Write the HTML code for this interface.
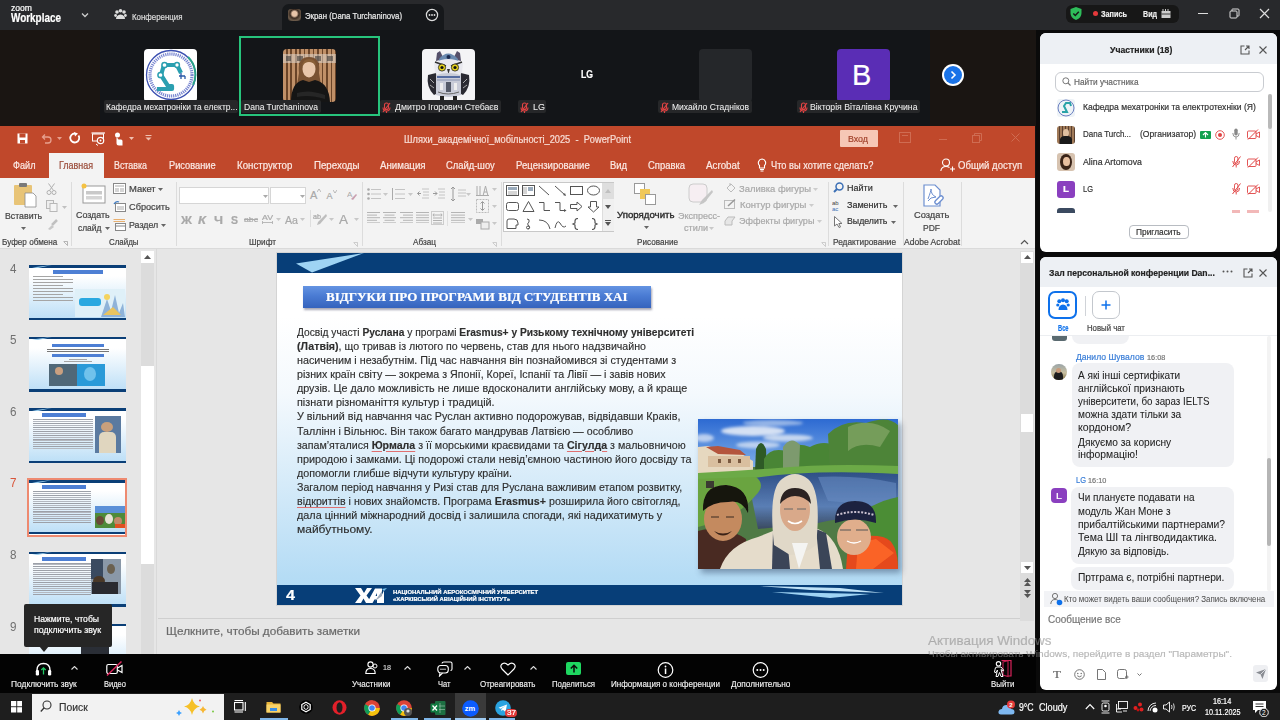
<!DOCTYPE html>
<html><head><meta charset="utf-8">
<style>
*{margin:0;padding:0;box-sizing:border-box}
html,body{width:1280px;height:720px;overflow:hidden;background:#0c0c0c;font-family:"Liberation Sans",sans-serif}
.a{position:absolute}
.t{position:absolute;white-space:nowrap;line-height:1;-webkit-text-stroke:0.2px currentColor}
b{font-weight:bold}
.sp{text-decoration:underline solid #e07070;text-decoration-thickness:0.7px;text-underline-offset:1.5px}
#top{left:0;top:0;width:1280px;height:30px;background:#28292c}
#strip{left:0;top:30px;width:1280px;height:96px;background:#131518}
</style></head><body>
<div id="top" class="a">
  <div class="t" style="left:10.5px;top:4px;font-size:9px;color:#fff;;transform:scaleX(0.9539);transform-origin:0 0">zoom</div>
  <div class="t" style="left:10.5px;top:12px;font-size:12.5px;color:#fff;font-weight:bold;;transform:scaleX(0.7937);transform-origin:0 0">Workplace</div>
  <svg class="a" style="left:80px;top:11px" width="10" height="8" viewBox="0 0 10 8"><path d="M2 2.5 L5 5.5 L8 2.5" stroke="#ccc" stroke-width="1.3" fill="none"/></svg>
  <svg class="a" style="left:114px;top:9px" width="13" height="12" viewBox="0 0 13 12"><circle cx="3" cy="3" r="1.8" fill="#ddd"/><circle cx="6.5" cy="1.8" r="1.8" fill="#ddd"/><circle cx="10" cy="3" r="1.8" fill="#ddd"/><path d="M2 10 Q2 6 6.5 5.5 Q11 6 11 10 Z" fill="#ddd"/><circle cx="1.6" cy="6.5" r="1.4" fill="#ddd"/><circle cx="11.4" cy="6.5" r="1.4" fill="#ddd"/></svg>
  <div class="t" style="left:132px;top:12px;font-size:9.5px;color:#ddd;;transform:scaleX(0.8296);transform-origin:0 0">Конференция</div>
  <div class="a" style="left:282px;top:4px;width:162px;height:26px;background:#16181b;border-radius:7px 7px 0 0"></div>
  <div class="a" style="left:288px;top:9px;width:13px;height:12px;border-radius:3px;background:radial-gradient(circle at 50% 40%,#e8c4a8 0 25%,#3a2a20 45%,#6b5a4a 70%,#2a2220 100%)"></div>
  <div class="t" style="left:305px;top:11px;font-size:9.5px;color:#eee;;transform:scaleX(0.8209);transform-origin:0 0">Экран (Dana Turchaninova)</div>
  <svg class="a" style="left:425px;top:8px" width="14" height="14" viewBox="0 0 14 14"><circle cx="7" cy="7" r="5.6" stroke="#ddd" stroke-width="1.2" fill="none"/><circle cx="4.5" cy="7" r="0.9" fill="#ddd"/><circle cx="7" cy="7" r="0.9" fill="#ddd"/><circle cx="9.5" cy="7" r="0.9" fill="#ddd"/></svg>
  <div class="a" style="left:1066px;top:5px;width:113px;height:17.5px;background:#171717;border-radius:6px"></div>
  <svg class="a" style="left:1069px;top:6px" width="14" height="15" viewBox="0 0 14 15"><path d="M7 1 L12.5 3 L12.5 7 Q12.5 12 7 14 Q1.5 12 1.5 7 L1.5 3 Z" fill="#2ebd5a"/><path d="M4.3 7.5 L6.3 9.5 L9.8 5.8" stroke="#181818" stroke-width="1.5" fill="none"/></svg>
  <div class="a" style="left:1093px;top:11px;width:5px;height:5px;border-radius:50%;background:#e5393b"></div>
  <div class="t" style="left:1101px;top:9.5px;font-size:9px;color:#eee;font-weight:bold;;transform:scaleX(0.8086);transform-origin:0 0">Запись</div>
  <div class="t" style="left:1143px;top:9.5px;font-size:9px;color:#eee;font-weight:bold;;transform:scaleX(0.7887);transform-origin:0 0">Вид</div>
  <svg class="a" style="left:1161px;top:9px" width="10" height="9" viewBox="0 0 10 9"><rect x="0.5" y="2" width="9" height="7" fill="#ccc"/><path d="M2 0v3M4.5 0v3M7 0v3" stroke="#ccc"/><path d="M0.5 5h9" stroke="#181818" stroke-width="0.8"/></svg>
  <div class="a" style="left:1198px;top:13px;width:10px;height:1px;background:#ddd"></div>
  <svg class="a" style="left:1229px;top:8px" width="11" height="11" viewBox="0 0 11 11"><rect x="1" y="3" width="7" height="7" rx="1" stroke="#ddd" fill="none"/><path d="M3 3 V1.5 Q3 1 3.5 1 H9 Q10 1 10 2 V7.5 Q10 8 9.5 8 H8" stroke="#ddd" fill="none"/></svg>
  <svg class="a" style="left:1259px;top:8px" width="11" height="11" viewBox="0 0 11 11"><path d="M1 1 L10 10 M10 1 L1 10" stroke="#ddd" stroke-width="1.2"/></svg>
</div>

<div id="strip" class="a">
  <div class="a" style="left:0;top:0;width:100px;height:96px;background:#1a1512"></div>
  <div class="a" style="left:930px;top:0;width:110px;height:96px;background:#1a1512"></div>
  <!-- Kafedra -->
  <div class="a" style="left:144px;top:19px;width:53px;height:53px;background:#fff;border-radius:4px;overflow:hidden">
    <svg width="53" height="53" viewBox="0 0 53 53"><circle cx="27" cy="26" r="24.5" fill="none" stroke="#3b4fb0" stroke-width="1.3"/>
    <circle cx="27" cy="26" r="21" fill="none" stroke="#4a5cc0" stroke-width="3.2" stroke-dasharray="1.2 0.9" opacity="0.75"/>
    <path d="M44 8 A24.5 24.5 0 0 1 49 36" stroke="#2aa38a" stroke-width="2" fill="none"/>
    <path d="M13 40 H28 V37 H24 L17 26 L20 16 L33 16 L37 24" stroke="#2a9fb0" stroke-width="4.2" fill="none" stroke-linejoin="round"/>
    <circle cx="16.5" cy="26" r="2.6" fill="#fff" stroke="#2a9fb0" stroke-width="1.5"/><circle cx="20.5" cy="16" r="2.6" fill="#fff" stroke="#2a9fb0" stroke-width="1.5"/><circle cx="33" cy="16" r="2.4" fill="#fff" stroke="#2a9fb0" stroke-width="1.5"/>
    <path d="M35 27 h6 M37 24 v6 M41 27 v3" stroke="#2a5aa8" stroke-width="1.3"/></svg>
  </div>
  <div class="a" style="left:104px;top:70px;width:134px;height:13px;background:#262729;border-radius:2px"></div>
  <div class="t" style="left:105.6px;top:72.6px;font-size:9px;color:#eee;-webkit-text-stroke:0.05px #eee;;transform:scaleX(0.9382);transform-origin:0 0">Кафедра мехатроніки та електр...</div>
  <!-- Dana -->
  <div class="a" style="left:239px;top:6px;width:141px;height:80px;border:2px solid #27c47c"></div>
  <div class="a" style="left:283px;top:19px;width:53px;height:53px;border-radius:4px;overflow:hidden;background:repeating-linear-gradient(90deg,#c09068 0 2.5px,#6a4428 2.5px 4.5px)">
    <svg class="a" style="left:0;top:0" width="53" height="53" viewBox="0 0 53 53"><rect x="0" y="5" width="53" height="9" fill="#ddd6cc" opacity=".55"/><path d="M3 7h5v5h-5z M14 7h6v5h-6z M32 7h6v5h-6z M44 7h6v5h-6z" fill="#333" opacity=".55"/>
    <path d="M16 24 Q14 8 26 8 Q38 8 36 24 L38 36 L14 36Z" fill="#7a5232"/>
    <ellipse cx="26" cy="20" rx="6.5" ry="8.5" fill="#e9c6aa"/>
    <path d="M19 17 Q20 10 26 10 Q33 10 33 17 Q30 13 26 13 Q22 13 19 17Z" fill="#8a6038"/>
    <path d="M8 53 Q8 34 20 31 L26 33 L32 31 Q46 34 47 53Z" fill="#151515"/>
    <path d="M14 44 Q26 40 42 46 L42 50 Q26 45 14 48Z" fill="#262626"/></svg>
  </div>
  <div class="a" style="left:241px;top:70px;width:80px;height:13px;background:#262729;border-radius:2px"></div>
  <div class="t" style="left:244px;top:72.6px;font-size:9px;color:#eee;-webkit-text-stroke:0.05px #eee;;transform:scaleX(0.9480);transform-origin:0 0">Dana Turchaninova</div>
  <!-- Dmytro -->
  <div class="a" style="left:422px;top:19px;width:53px;height:53px;background:#f4f4f6;border-radius:4px;overflow:hidden">
    <svg width="53" height="53" viewBox="0 0 53 53">
    <path d="M6 26 Q4 38 12 46 L16 44 L14 24Z" fill="#2a2a32"/><path d="M47 26 Q49 38 41 46 L37 44 L39 24Z" fill="#2a2a32"/>
    <path d="M8 30 L12 34 M8 36 L12 39 M45 30 L41 34 M45 36 L41 39" stroke="#ccc" stroke-width="0.8"/>
    <path d="M15 4 L18 2 L22 10 L14 12Z" fill="#55506a"/><path d="M38 4 L35 2 L31 10 L39 12Z" fill="#55506a"/>
    <path d="M17 10 Q26 -1 36 10 L36 14 L17 14Z" fill="#6a8ab0"/><circle cx="26.5" cy="8" r="2" fill="#1a2a50"/>
    <path d="M12 14 Q26 6 41 14 L40 24 Q26 28 13 24Z" fill="#e8e8ee"/>
    <path d="M13 13 L24 17 M40 13 L29 17" stroke="#333" stroke-width="1.6"/>
    <circle cx="20" cy="18.5" r="3.6" fill="#e6d21a" stroke="#222" stroke-width="0.8"/><circle cx="33" cy="18.5" r="3.6" fill="#e6d21a" stroke="#222" stroke-width="0.8"/>
    <circle cx="20" cy="18.5" r="1.6" fill="#111"/><circle cx="33" cy="18.5" r="1.6" fill="#111"/>
    <path d="M25 20 L26.5 25 L28 20Z" fill="#333"/>
    <path d="M14 26 Q26 22 39 26 L39 46 Q26 50 14 46Z" fill="#c9ccd8"/>
    <path d="M15 28 H38" stroke="#2f4c8f" stroke-width="1.4"/><path d="M15 31 H38" stroke="#8a93b0" stroke-width="1"/>
    <rect x="24" y="33" width="5" height="10" fill="#555a68"/><rect x="18" y="34" width="3" height="7" fill="#eee"/><rect x="32" y="34" width="3" height="7" fill="#eee"/>
    <path d="M16 43 Q26 47 37 43" stroke="#666" stroke-width="1" fill="none"/>
    <path d="M18 47 h4 v5 h-4z M31 47 h4 v5 h-4z" fill="#222"/>
    </svg>
  </div>
  <div class="a" style="left:380px;top:70px;width:121px;height:13px;background:#262729;border-radius:2px"></div>
  <svg class="a" style="left:382px;top:72px" width="9" height="11" viewBox="0 0 9 11"><path d="M4.5 1 Q6.5 1 6.5 3 V5.5 Q6.5 7.5 4.5 7.5 Q2.5 7.5 2.5 5.5 V3 Q2.5 1 4.5 1Z M1 5.5 Q1 9 4.5 9 Q8 9 8 5.5 M4.5 9 V11" stroke="#e04343" stroke-width="1.1" fill="none"/><path d="M1 10 L8 1" stroke="#e04343" stroke-width="1.2"/></svg>
  <div class="t" style="left:395px;top:72.6px;font-size:9px;color:#eee;-webkit-text-stroke:0.05px #eee;;transform:scaleX(0.9737);transform-origin:0 0">Дмитро Ігорович Стебаєв</div>
  <!-- LG -->
  <div class="t" style="left:580.8px;top:40px;font-size:10px;color:#fff;font-weight:bold;;transform:scaleX(0.8639);transform-origin:0 0">LG</div>
  <div class="a" style="left:518px;top:70px;width:28px;height:13px;background:#262729;border-radius:2px"></div>
  <svg class="a" style="left:520px;top:72px" width="9" height="11" viewBox="0 0 9 11"><path d="M4.5 1 Q6.5 1 6.5 3 V5.5 Q6.5 7.5 4.5 7.5 Q2.5 7.5 2.5 5.5 V3 Q2.5 1 4.5 1Z M1 5.5 Q1 9 4.5 9 Q8 9 8 5.5 M4.5 9 V11" stroke="#e04343" stroke-width="1.1" fill="none"/><path d="M1 10 L8 1" stroke="#e04343" stroke-width="1.2"/></svg>
  <div class="t" style="left:533px;top:72.6px;font-size:9px;color:#eee;-webkit-text-stroke:0.05px #eee;;transform:scaleX(0.9987);transform-origin:0 0">LG</div>
  <!-- Mykhailo -->
  <div class="a" style="left:699px;top:19px;width:53px;height:53px;background:#25272a;border-radius:4px"></div>
  <div class="a" style="left:658px;top:70px;width:94px;height:13px;background:#262729;border-radius:2px"></div>
  <svg class="a" style="left:660px;top:72px" width="9" height="11" viewBox="0 0 9 11"><path d="M4.5 1 Q6.5 1 6.5 3 V5.5 Q6.5 7.5 4.5 7.5 Q2.5 7.5 2.5 5.5 V3 Q2.5 1 4.5 1Z M1 5.5 Q1 9 4.5 9 Q8 9 8 5.5 M4.5 9 V11" stroke="#e04343" stroke-width="1.1" fill="none"/><path d="M1 10 L8 1" stroke="#e04343" stroke-width="1.2"/></svg>
  <div class="t" style="left:672px;top:72.6px;font-size:9px;color:#eee;-webkit-text-stroke:0.05px #eee;;transform:scaleX(0.9461);transform-origin:0 0">Михайло Стадніков</div>
  <!-- Viktoria -->
  <div class="a" style="left:837px;top:19px;width:53px;height:53px;background:#5a2db5;border-radius:4px"></div>
  <div class="t" style="left:852px;top:31px;font-size:29px;color:#fff">B</div>
  <div class="a" style="left:797px;top:70px;width:123px;height:13px;background:#262729;border-radius:2px"></div>
  <svg class="a" style="left:799px;top:72px" width="9" height="11" viewBox="0 0 9 11"><path d="M4.5 1 Q6.5 1 6.5 3 V5.5 Q6.5 7.5 4.5 7.5 Q2.5 7.5 2.5 5.5 V3 Q2.5 1 4.5 1Z M1 5.5 Q1 9 4.5 9 Q8 9 8 5.5 M4.5 9 V11" stroke="#e04343" stroke-width="1.1" fill="none"/><path d="M1 10 L8 1" stroke="#e04343" stroke-width="1.2"/></svg>
  <div class="t" style="left:810px;top:72.6px;font-size:9px;color:#eee;-webkit-text-stroke:0.05px #eee;;transform:scaleX(0.9656);transform-origin:0 0">Вікторія Віталівна Кручина</div>
  <!-- arrow -->
  <div class="a" style="left:942px;top:34px;width:22px;height:22px;border-radius:50%;background:#fff"></div>
  <div class="a" style="left:944px;top:36px;width:18px;height:18px;border-radius:50%;background:#1a73e8"></div>
  <svg class="a" style="left:948px;top:40px" width="10" height="10" viewBox="0 0 10 10"><path d="M3.5 1.5 L7 5 L3.5 8.5" stroke="#fff" stroke-width="1.6" fill="none"/></svg>
</div>

<div class="a" style="left:0px;top:126px;width:1036px;height:529px;background:#e6e6e6;"></div>
<div class="a" style="left:0px;top:126px;width:1036px;height:52px;background:#c0482b;"></div>
<svg class="a" style="left:17px;top:133px;" width="11" height="11" viewBox="0 0 11 11"><rect x="0.5" y="0.5" width="10" height="10" fill="#fff"/><rect x="2.5" y="0.5" width="6" height="4" fill="#c0482b"/><rect x="3" y="7" width="5" height="3.5" fill="#c0482b"/></svg>
<svg class="a" style="left:40px;top:133px;" width="12" height="11" viewBox="0 0 12 11"><path d="M3 4 H8 Q11 4 11 7 Q11 10 8 10 H5 M5 1.5 L2.5 4 L5 6.5" stroke="#e6a08e" stroke-width="1.3" fill="none"/></svg>
<svg class="a" style="left:57px;top:137px;" width="5" height="3" viewBox="0 0 5 3"><path d="M0 0 H5 L2.5 3Z" fill="#e6a08e"/></svg>
<svg class="a" style="left:69px;top:132px;" width="12" height="12" viewBox="0 0 12 12"><path d="M9.5 3.5 A4.5 4.5 0 1 1 6 1.5" stroke="#fff" stroke-width="1.8" fill="none"/><path d="M5 0 L9 1.5 L6 4.5Z" fill="#fff"/></svg>
<svg class="a" style="left:91px;top:132px;" width="15" height="14" viewBox="0 0 15 14"><path d="M0.5 1 H14" stroke="#fff" stroke-width="1.2"/><rect x="1.5" y="2" width="11" height="7" fill="none" stroke="#fff" stroke-width="1"/><circle cx="9.5" cy="8.5" r="3.2" fill="#c0482b" stroke="#fff" stroke-width="1.2"/><circle cx="9.5" cy="8.5" r="1" fill="#fff"/><path d="M5 12 L7 13.5" stroke="#fff"/></svg>
<svg class="a" style="left:114px;top:132px;" width="9" height="14" viewBox="0 0 9 14"><circle cx="3.5" cy="3" r="2.5" fill="#fff"/><path d="M2.5 5 V11 Q2.5 13.5 5 13.5 H8.5 V9 Q8.5 7.5 7 7.5 H4.5" fill="#fff"/></svg>
<svg class="a" style="left:129px;top:137px;" width="5" height="3" viewBox="0 0 5 3"><path d="M0 0 H5 L2.5 3Z" fill="#f0c0b0"/></svg>
<svg class="a" style="left:145px;top:135px;" width="7" height="6" viewBox="0 0 7 6"><path d="M0.5 0.5 H6.5" stroke="#f0c0b0"/><path d="M0.5 2.5 H6.5 L3.5 5.5Z" fill="#f0c0b0"/></svg>
<div class="t" style="left:403.75px;top:133.61px;font-size:10.5px;color:#f7ddd5;;transform:scaleX(0.8820);transform-origin:0 0">Шляхи_академічної_мобільності_2025 &nbsp;- &nbsp;PowerPoint</div>
<div class="a" style="left:839.5px;top:130px;width:38px;height:17px;background:#f6c7b6;border-radius:1px"></div>
<div class="t" style="left:848px;top:133.96px;font-size:9.5px;color:#a0402a;;transform:scaleX(0.9302);transform-origin:0 0">Вход</div>
<svg class="a" style="left:899px;top:132px;" width="12" height="11" viewBox="0 0 12 11"><rect x="0.5" y="0.5" width="11" height="10" fill="none" stroke="#cf6c52"/><path d="M3 3.5 H9" stroke="#cf6c52"/></svg>
<div class="a" style="left:939px;top:139px;width:8px;height:1px;background:#cf6c52;"></div>
<svg class="a" style="left:972px;top:133px;" width="10" height="10" viewBox="0 0 10 10"><rect x="0.5" y="2.5" width="7" height="7" fill="none" stroke="#cf6c52"/><path d="M2.5 2.5 V0.5 H9.5 V7.5 H7.5" fill="none" stroke="#cf6c52"/></svg>
<svg class="a" style="left:1011px;top:133px;" width="9" height="9" viewBox="0 0 9 9"><path d="M0.5 0.5 L8.5 8.5 M8.5 0.5 L0.5 8.5" stroke="#cf6c52"/></svg>
<div class="a" style="left:48.75px;top:153px;width:54.75px;height:26px;background:#f3f3f3;"></div>
<div class="t" style="left:12.5px;top:160.73px;font-size:10px;color:#fbe9e4;;transform:scaleX(0.9149);transform-origin:0 0">Файл</div>
<div class="t" style="left:59px;top:160.73px;font-size:10px;color:#9a4a38;;transform:scaleX(0.8933);transform-origin:0 0">Главная</div>
<div class="t" style="left:114px;top:160.73px;font-size:10px;color:#fbe9e4;;transform:scaleX(0.8878);transform-origin:0 0">Вставка</div>
<div class="t" style="left:168.7px;top:160.73px;font-size:10px;color:#fbe9e4;;transform:scaleX(0.9270);transform-origin:0 0">Рисование</div>
<div class="t" style="left:236.6px;top:160.73px;font-size:10px;color:#fbe9e4;;transform:scaleX(0.9696);transform-origin:0 0">Конструктор</div>
<div class="t" style="left:313.8px;top:160.73px;font-size:10px;color:#fbe9e4;;transform:scaleX(0.9700);transform-origin:0 0">Переходы</div>
<div class="t" style="left:380px;top:160.73px;font-size:10px;color:#fbe9e4;;transform:scaleX(0.9712);transform-origin:0 0">Анимация</div>
<div class="t" style="left:446px;top:160.73px;font-size:10px;color:#fbe9e4;;transform:scaleX(0.9394);transform-origin:0 0">Слайд-шоу</div>
<div class="t" style="left:515.75px;top:160.73px;font-size:10px;color:#fbe9e4;;transform:scaleX(0.9551);transform-origin:0 0">Рецензирование</div>
<div class="t" style="left:610px;top:160.73px;font-size:10px;color:#fbe9e4;;transform:scaleX(0.9396);transform-origin:0 0">Вид</div>
<div class="t" style="left:647.5px;top:160.73px;font-size:10px;color:#fbe9e4;;transform:scaleX(0.9431);transform-origin:0 0">Справка</div>
<div class="t" style="left:706px;top:160.73px;font-size:10px;color:#fbe9e4;;transform:scaleX(0.9777);transform-origin:0 0">Acrobat</div>
<svg class="a" style="left:757px;top:158px;" width="10" height="14" viewBox="0 0 10 14"><path d="M5 1 A3.8 3.8 0 0 1 7.5 7.5 V10 H2.5 V7.5 A3.8 3.8 0 0 1 5 1Z" fill="none" stroke="#fff" stroke-width="1.1"/><path d="M3 11.5 H7 M3.5 13 H6.5" stroke="#fff"/></svg>
<div class="t" style="left:771px;top:160.73px;font-size:10px;color:#fbe9e4;;transform:scaleX(0.9263);transform-origin:0 0">Что вы хотите сделать?</div>
<svg class="a" style="left:940px;top:158px;" width="15" height="14" viewBox="0 0 15 14"><circle cx="6" cy="4.5" r="3.5" fill="none" stroke="#fff" stroke-width="1.1"/><path d="M0.8 13 Q1.5 8.5 6 8.5 Q8 8.5 9.5 9.5" fill="none" stroke="#fff" stroke-width="1.1"/><path d="M10 11 H15 M12.5 8.5 V13.5" stroke="#fff" stroke-width="1.1"/></svg>
<div class="t" style="left:957.8px;top:160.73px;font-size:10px;color:#fbe9e4;;transform:scaleX(0.9555);transform-origin:0 0">Общий доступ</div>
<div class="a" style="left:0px;top:178px;width:1036px;height:71px;background:#f3f3f3;"></div>
<div class="a" style="left:0px;top:248px;width:1036px;height:1px;background:#dadada;"></div>
<div class="a" style="left:71px;top:182px;width:1px;height:64px;background:#dcdcdc;"></div>
<div class="a" style="left:175.8px;top:182px;width:1px;height:64px;background:#dcdcdc;"></div>
<div class="a" style="left:362px;top:182px;width:1px;height:64px;background:#dcdcdc;"></div>
<div class="a" style="left:500.8px;top:182px;width:1px;height:64px;background:#dcdcdc;"></div>
<div class="a" style="left:828px;top:182px;width:1px;height:64px;background:#dcdcdc;"></div>
<div class="a" style="left:902.5px;top:182px;width:1px;height:64px;background:#dcdcdc;"></div>
<div class="a" style="left:961px;top:182px;width:1px;height:64px;background:#dcdcdc;"></div>
<svg class="a" style="left:13px;top:182px;" width="24" height="26" viewBox="0 0 24 26"><rect x="1" y="3" width="18" height="20" rx="1" fill="#e8c477"/><rect x="6" y="1" width="8" height="4" rx="1" fill="#7a7a7a"/><path d="M12 11 H20 L23 14 V25 H12Z" fill="#fff" stroke="#8a8a8a" stroke-width="0.8"/></svg>
<div class="t" style="left:4.9px;top:211.70px;font-size:8.5px;color:#444;;transform:scaleX(1.0297);transform-origin:0 0">Вставить</div>
<svg class="a" style="left:21px;top:227px;" width="5" height="3" viewBox="0 0 5 3"><path d="M0 0 H5 L2.5 3Z" fill="#666"/></svg>
<svg class="a" style="left:46px;top:183px;" width="11" height="12" viewBox="0 0 11 12"><circle cx="3" cy="9.5" r="2" fill="none" stroke="#b0b0b0"/><circle cx="8" cy="9.5" r="2" fill="none" stroke="#b0b0b0"/><path d="M3.5 7.5 L8.5 0.5 M7.5 7.5 L2.5 0.5" stroke="#b0b0b0"/></svg>
<svg class="a" style="left:46px;top:200px;" width="12" height="12" viewBox="0 0 12 12"><rect x="0.5" y="0.5" width="7" height="8" fill="#eee" stroke="#b8b8b8"/><rect x="4" y="3.5" width="7" height="8" fill="#f5f5f5" stroke="#b8b8b8"/></svg>
<svg class="a" style="left:62px;top:206px;" width="5" height="3" viewBox="0 0 5 3"><path d="M0 0 H5 L2.5 3Z" fill="#c0c0c0"/></svg>
<svg class="a" style="left:47px;top:219px;" width="11" height="11" viewBox="0 0 11 11"><path d="M10 1 L5 6" stroke="#c0c0c0" stroke-width="2.5"/><path d="M1 10 L5 6 L7 8 L3 11Z" fill="#c8c8c8"/></svg>
<div class="t" style="left:1.7px;top:238.40px;font-size:8.5px;color:#444;;transform:scaleX(0.9573);transform-origin:0 0">Буфер обмена</div>
<svg class="a" style="left:63px;top:241px;" width="5" height="5" viewBox="0 0 5 5"><path d="M0.5 0.5 H4.5 V4.5" fill="none" stroke="#999" stroke-width="0.7"/><path d="M1 1 L4.5 4.5" stroke="#999" stroke-width="0.7"/></svg>
<svg class="a" style="left:80px;top:183px;" width="26" height="21" viewBox="0 0 26 21"><rect x="3" y="3" width="22" height="17" fill="#fff" stroke="#999"/><rect x="6" y="8" width="16" height="3.5" fill="#c9c9c9"/><rect x="6" y="13" width="16" height="3.5" fill="#d5d5d5"/><circle cx="4" cy="3" r="2.5" fill="#f5c242"/></svg>
<div class="t" style="left:76px;top:211.30px;font-size:8.5px;color:#444;;transform:scaleX(1.0429);transform-origin:0 0">Создать</div>
<div class="t" style="left:77.6px;top:223.60px;font-size:8.5px;color:#444;;transform:scaleX(0.9892);transform-origin:0 0">слайд</div>
<svg class="a" style="left:105px;top:227px;" width="5" height="3" viewBox="0 0 5 3"><path d="M0 0 H5 L2.5 3Z" fill="#666"/></svg>
<svg class="a" style="left:113px;top:183px;" width="13" height="11" viewBox="0 0 13 11"><rect x="0.5" y="0.5" width="12" height="10" fill="#fff" stroke="#888"/><path d="M2 3 H11 M2 6 H6 M7 6 H11 M2 8 H6 M7 8 H11" stroke="#aaa"/></svg>
<div class="t" style="left:128.7px;top:185.40px;font-size:8.5px;color:#444;;transform:scaleX(1.1096);transform-origin:0 0">Макет</div>
<svg class="a" style="left:158px;top:188px;" width="5" height="3" viewBox="0 0 5 3"><path d="M0 0 H5 L2.5 3Z" fill="#666"/></svg>
<svg class="a" style="left:113px;top:200px;" width="13" height="12" viewBox="0 0 13 12"><rect x="2.5" y="3.5" width="10" height="8" fill="#fff" stroke="#888"/><path d="M4 7 H11 M4 9 H11" stroke="#aaa"/><path d="M1 4 Q3 0.5 6 2" stroke="#3a78c0" stroke-width="1.3" fill="none"/></svg>
<div class="t" style="left:128.7px;top:203.30px;font-size:8.5px;color:#444;;transform:scaleX(1.0799);transform-origin:0 0">Сбросить</div>
<svg class="a" style="left:113px;top:218px;" width="13" height="13" viewBox="0 0 13 13"><path d="M0.5 1.5 H12 M0.5 3.5 H12" stroke="#e8b070"/><rect x="2.5" y="5.5" width="10" height="7" fill="#fff" stroke="#888"/><path d="M2.5 8 H12.5" stroke="#888"/></svg>
<div class="t" style="left:128.7px;top:220.80px;font-size:8.5px;color:#444;;transform:scaleX(1.0424);transform-origin:0 0">Раздел</div>
<svg class="a" style="left:161px;top:224px;" width="5" height="3" viewBox="0 0 5 3"><path d="M0 0 H5 L2.5 3Z" fill="#666"/></svg>
<div class="t" style="left:109px;top:238.40px;font-size:8.5px;color:#444;;transform:scaleX(0.9319);transform-origin:0 0">Слайды</div>
<div class="a" style="left:178.6px;top:187px;width:90.6px;height:17px;background:#fff;border:1px solid #d6d6d6"></div>
<div class="a" style="left:270px;top:187px;width:36.25px;height:17px;background:#fff;border:1px solid #d6d6d6"></div>
<svg class="a" style="left:263px;top:195px;" width="5" height="3" viewBox="0 0 5 3"><path d="M0 0 H5 L2.5 3Z" fill="#aaa"/></svg>
<svg class="a" style="left:300px;top:195px;" width="5" height="3" viewBox="0 0 5 3"><path d="M0 0 H5 L2.5 3Z" fill="#aaa"/></svg>
<div class="t" style="left:310px;top:190.19px;font-size:11px;color:#a9a9a9;">A</div>
<svg class="a" style="left:317px;top:189px;" width="4" height="3" viewBox="0 0 4 3"><path d="M0 3 L2 0 L4 3" fill="none" stroke="#aaa" stroke-width="0.8"/></svg>
<div class="t" style="left:326.5px;top:191.88px;font-size:9px;color:#a9a9a9;">A</div>
<svg class="a" style="left:333px;top:190px;" width="4" height="3" viewBox="0 0 4 3"><path d="M0 0 L2 3 L4 0" fill="none" stroke="#aaa" stroke-width="0.8"/></svg>
<svg class="a" style="left:347px;top:190px;" width="10" height="10" viewBox="0 0 10 10"><text x="0" y="7" font-size="8" fill="#aaa" font-family="Liberation Sans">A</text><path d="M4 9 L9 4 L10 5 L6 10Z" fill="#c9a0b0"/></svg>
<div class="t" style="left:180.9px;top:214.69px;font-size:11px;color:#a9a9a9;font-weight:bold;;transform:scaleX(1.1052);transform-origin:0 0">Ж</div>
<div class="t" style="left:198px;top:214.69px;font-size:11px;color:#a9a9a9;font-weight:bold;font-style:italic;;transform:scaleX(1.1824);transform-origin:0 0">К</div>
<div class="t" style="left:214px;top:214.69px;font-size:11px;color:#a9a9a9;font-weight:bold;;transform:scaleX(1.1636);transform-origin:0 0">Ч</div>
<div class="t" style="left:231px;top:214.69px;font-size:11px;color:#a9a9a9;font-weight:bold;;transform:scaleX(0.9532);transform-origin:0 0">S</div>
<div class="t" style="left:244px;top:216.23px;font-size:8px;color:#a9a9a9;;transform:scaleX(1.0847);transform-origin:0 0">abc</div>
<div class="a" style="left:244px;top:219px;width:14px;height:1px;background:#aaa;"></div>
<div class="t" style="left:262px;top:214.07px;font-size:7px;color:#a9a9a9;;transform:scaleX(1.2460);transform-origin:0 0">AV</div>
<svg class="a" style="left:262px;top:221px;" width="11" height="3" viewBox="0 0 11 3"><path d="M0.5 1.5 H10.5 M0.5 0 V3 M10.5 0 V3" stroke="#aaa" stroke-width="0.8"/></svg>
<svg class="a" style="left:276px;top:218px;" width="5" height="3" viewBox="0 0 5 3"><path d="M0 0 H5 L2.5 3Z" fill="#c8c8c8"/></svg>
<div class="t" style="left:285px;top:214.69px;font-size:11px;color:#a9a9a9;;transform:scaleX(0.9652);transform-origin:0 0">Aa</div>
<svg class="a" style="left:300px;top:218px;" width="5" height="3" viewBox="0 0 5 3"><path d="M0 0 H5 L2.5 3Z" fill="#c8c8c8"/></svg>
<div class="a" style="left:309.7px;top:210px;width:1px;height:17px;background:#dedede;"></div>
<div class="t" style="left:313px;top:213.50px;font-size:6.5px;color:#a9a9a9;;transform:scaleX(1.1058);transform-origin:0 0">ab</div>
<svg class="a" style="left:314px;top:213px;" width="13" height="12" viewBox="0 0 13 12"><path d="M12 1 L4 9 L3 12 L6 11 L13 3" fill="#bdbdbd"/></svg>
<svg class="a" style="left:329px;top:218px;" width="5" height="3" viewBox="0 0 5 3"><path d="M0 0 H5 L2.5 3Z" fill="#c8c8c8"/></svg>
<div class="t" style="left:339px;top:213.84px;font-size:12px;color:#a9a9a9;;transform:scaleX(1.1228);transform-origin:0 0">A</div>
<svg class="a" style="left:354px;top:218px;" width="5" height="3" viewBox="0 0 5 3"><path d="M0 0 H5 L2.5 3Z" fill="#c8c8c8"/></svg>
<div class="t" style="left:249px;top:238.30px;font-size:8.5px;color:#444;;transform:scaleX(0.9654);transform-origin:0 0">Шрифт</div>
<svg class="a" style="left:353px;top:242px;" width="5" height="5" viewBox="0 0 5 5"><path d="M0.5 0.5 H4.5 V4.5" fill="none" stroke="#bbb" stroke-width="0.7"/><path d="M1 1 L4.5 4.5" stroke="#bbb" stroke-width="0.7"/></svg>
<svg class="a" style="left:367px;top:188px;" width="14" height="12" viewBox="0 0 14 12"><circle cx="1.5" cy="1.5" r="1.3" fill="#aaa"/><circle cx="1.5" cy="6" r="1.3" fill="#aaa"/><circle cx="1.5" cy="10.5" r="1.3" fill="#aaa"/><path d="M4 1.5 H14 M4 6 H14 M4 10.5 H14" stroke="#c4c4c4"/></svg>
<svg class="a" style="left:383px;top:193px;" width="5" height="3" viewBox="0 0 5 3"><path d="M0 0 H5 L2.5 3Z" fill="#c8c8c8"/></svg>
<svg class="a" style="left:391px;top:188px;" width="14" height="12" viewBox="0 0 14 12"><path d="M1.5 0 V12" stroke="#aaa"/><path d="M4 1.5 H14 M4 6 H14 M4 10.5 H14" stroke="#c4c4c4"/></svg>
<svg class="a" style="left:408px;top:193px;" width="5" height="3" viewBox="0 0 5 3"><path d="M0 0 H5 L2.5 3Z" fill="#c8c8c8"/></svg>
<svg class="a" style="left:417px;top:188px;" width="12" height="12" viewBox="0 0 12 12"><path d="M5 1 H12 M6 4 H12 M6 7 H12 M5 10 H12" stroke="#c4c4c4"/><path d="M4 5.5 H0.5 M2.5 3.5 L0.5 5.5 L2.5 7.5" stroke="#999" fill="none"/></svg>
<svg class="a" style="left:433px;top:188px;" width="12" height="12" viewBox="0 0 12 12"><path d="M5 1 H12 M6 4 H12 M6 7 H12 M5 10 H12" stroke="#c4c4c4"/><path d="M0 5.5 H4 M2 3.5 L4 5.5 L2 7.5" stroke="#999" fill="none"/></svg>
<svg class="a" style="left:450px;top:186px;" width="16" height="16" viewBox="0 0 16 16"><path d="M3 1 V15 M1 3 L3 1 L5 3 M1 13 L3 15 L5 13" stroke="#999" fill="none"/><path d="M8 4 H16 M8 7 H16 M8 10 H16" stroke="#c4c4c4"/></svg>
<svg class="a" style="left:466px;top:193px;" width="5" height="3" viewBox="0 0 5 3"><path d="M0 0 H5 L2.5 3Z" fill="#c8c8c8"/></svg>
<svg class="a" style="left:476px;top:183px;" width="13" height="13" viewBox="0 0 13 13"><path d="M1 13 V3 M4 13 V3 M7 13 L9.5 3 L12 13 M8 9 H11" stroke="#aaa" fill="none"/><path d="M0 12.5 H13" stroke="#aaa"/></svg>
<svg class="a" style="left:492px;top:188px;" width="5" height="3" viewBox="0 0 5 3"><path d="M0 0 H5 L2.5 3Z" fill="#c8c8c8"/></svg>
<svg class="a" style="left:367px;top:212px;" width="13" height="11.4" viewBox="0 0 13 11.4"><rect x="0" y="0.0" width="13" height="1" fill="#b5b5b5"/><rect x="0" y="2.6" width="10" height="1" fill="#b5b5b5"/><rect x="0" y="5.2" width="13" height="1" fill="#b5b5b5"/><rect x="0" y="7.800000000000001" width="10" height="1" fill="#b5b5b5"/><rect x="0" y="10.4" width="13" height="1" fill="#b5b5b5"/></svg>
<svg class="a" style="left:383px;top:212px;" width="13" height="11.4" viewBox="0 0 13 11.4"><rect x="0" y="0.0" width="13" height="1" fill="#b5b5b5"/><rect x="1.5" y="2.6" width="10.0" height="1" fill="#b5b5b5"/><rect x="0" y="5.2" width="13" height="1" fill="#b5b5b5"/><rect x="1.5" y="7.800000000000001" width="10.0" height="1" fill="#b5b5b5"/><rect x="0" y="10.4" width="13" height="1" fill="#b5b5b5"/></svg>
<svg class="a" style="left:400px;top:212px;" width="13" height="11.4" viewBox="0 0 13 11.4"><rect x="0" y="0.0" width="13" height="1" fill="#b5b5b5"/><rect x="3" y="2.6" width="10" height="1" fill="#b5b5b5"/><rect x="0" y="5.2" width="13" height="1" fill="#b5b5b5"/><rect x="3" y="7.800000000000001" width="10" height="1" fill="#b5b5b5"/><rect x="0" y="10.4" width="13" height="1" fill="#b5b5b5"/></svg>
<svg class="a" style="left:416px;top:212px;" width="13" height="11.4" viewBox="0 0 13 11.4"><rect x="0" y="0.0" width="13" height="1" fill="#b5b5b5"/><rect x="0" y="2.6" width="13" height="1" fill="#b5b5b5"/><rect x="0" y="5.2" width="13" height="1" fill="#b5b5b5"/><rect x="0" y="7.800000000000001" width="13" height="1" fill="#b5b5b5"/><rect x="0" y="10.4" width="13" height="1" fill="#b5b5b5"/></svg>
<svg class="a" style="left:431px;top:211px;" width="13" height="14" viewBox="0 0 13 14"><rect x="0.5" y="0.5" width="12" height="13" fill="none" stroke="#ccc"/><path d="M2 4 H11 M3 2.5 L2 4 L3 5.5 M10 2.5 L11 4 L10 5.5 M2 7 H11 M2 9.5 H11 M2 12 H11" stroke="#b0b0b0" fill="none"/></svg>
<div class="a" style="left:447px;top:211px;width:1px;height:15px;background:#e0e0e0;"></div>
<svg class="a" style="left:451px;top:212px;" width="14" height="11.4" viewBox="0 0 14 11.4"><rect x="0" y="0.0" width="14" height="1" fill="#b5b5b5"/><rect x="0" y="2.6" width="14" height="1" fill="#b5b5b5"/><rect x="0" y="5.2" width="14" height="1" fill="#b5b5b5"/><rect x="0" y="7.800000000000001" width="14" height="1" fill="#b5b5b5"/><rect x="0" y="10.4" width="14" height="1" fill="#b5b5b5"/></svg>
<svg class="a" style="left:468px;top:218px;" width="5" height="3" viewBox="0 0 5 3"><path d="M0 0 H5 L2.5 3Z" fill="#c8c8c8"/></svg>
<svg class="a" style="left:476px;top:199px;" width="13" height="14" viewBox="0 0 13 14"><rect x="0.5" y="0.5" width="12" height="13" fill="none" stroke="#bbb" stroke-dasharray="2 1"/><path d="M6.5 3 V11 M4.5 4.5 L6.5 2.5 L8.5 4.5 M4.5 9.5 L6.5 11.5 L8.5 9.5" stroke="#999" fill="none"/></svg>
<svg class="a" style="left:492px;top:205px;" width="5" height="3" viewBox="0 0 5 3"><path d="M0 0 H5 L2.5 3Z" fill="#c8c8c8"/></svg>
<svg class="a" style="left:476px;top:217px;" width="14" height="13" viewBox="0 0 14 13"><rect x="0" y="2" width="7" height="5" fill="#aaa"/><rect x="5" y="5" width="8" height="7" fill="#eee" stroke="#aaa"/></svg>
<svg class="a" style="left:492px;top:222px;" width="5" height="3" viewBox="0 0 5 3"><path d="M0 0 H5 L2.5 3Z" fill="#c8c8c8"/></svg>
<div class="t" style="left:413px;top:237.80px;font-size:8.5px;color:#444;;transform:scaleX(0.9640);transform-origin:0 0">Абзац</div>
<svg class="a" style="left:492px;top:242px;" width="5" height="5" viewBox="0 0 5 5"><path d="M0.5 0.5 H4.5 V4.5" fill="none" stroke="#bbb" stroke-width="0.7"/><path d="M1 1 L4.5 4.5" stroke="#bbb" stroke-width="0.7"/></svg>
<div class="a" style="left:503.3px;top:181.7px;width:111px;height:50px;background:#fff;border:1px solid #c8c8c8"></div>
<div class="a" style="left:601.5px;top:182.7px;width:12.5px;height:48px;background:#f0f0f0;border-left:1px solid #ddd"></div>
<div class="a" style="left:602px;top:183px;width:12px;height:16px;background:#dedede;"></div>
<svg class="a" style="left:605px;top:189px;" width="6" height="4" viewBox="0 0 6 4"><path d="M0 4 L3 0 L6 4Z" fill="#c0c0c0"/></svg>
<svg class="a" style="left:605px;top:205px;" width="6" height="4" viewBox="0 0 6 4"><path d="M0 0 H6 L3 4Z" fill="#555"/></svg>
<svg class="a" style="left:605px;top:220px;" width="6" height="6" viewBox="0 0 6 6"><path d="M0 0.5 H6" stroke="#555"/><path d="M0 2 H6 L3 6Z" fill="#555"/></svg>
<svg class="a" style="left:505.5px;top:184.5px;" width="13" height="12" viewBox="0 0 13 12"><rect x="0.5" y="0.5" width="12" height="10" fill="#fff" stroke="#555"/><rect x="2" y="2" width="9" height="3" fill="#9ab"/><path d="M2 7 H11 M2 9 H11" stroke="#aaa"/></svg>
<svg class="a" style="left:521.7px;top:184.5px;" width="13" height="12" viewBox="0 0 13 12"><rect x="0.5" y="0.5" width="12" height="10" fill="#fff" stroke="#555"/><path d="M2 2 V9 M4 2 V9" stroke="#aaa"/><rect x="6" y="2" width="5" height="4" fill="#9ab"/></svg>
<svg class="a" style="left:537.9px;top:184.5px;" width="13" height="12" viewBox="0 0 13 12"><path d="M1 1 L11 10" stroke="#555"/></svg>
<svg class="a" style="left:554.1px;top:184.5px;" width="13" height="12" viewBox="0 0 13 12"><path d="M1 1 L11 10" stroke="#555"/><path d="M9 10 L12 11 L11 8Z" fill="#555"/></svg>
<svg class="a" style="left:570.3px;top:184.5px;" width="13" height="12" viewBox="0 0 13 12"><rect x="0.5" y="1.5" width="12" height="8" fill="none" stroke="#555"/></svg>
<svg class="a" style="left:586.5px;top:184.5px;" width="13" height="12" viewBox="0 0 13 12"><ellipse cx="6.5" cy="5.5" rx="6" ry="4.5" fill="none" stroke="#555"/></svg>
<svg class="a" style="left:505.5px;top:201.0px;" width="13" height="12" viewBox="0 0 13 12"><rect x="0.5" y="1.5" width="12" height="8" rx="2" fill="none" stroke="#555"/></svg>
<svg class="a" style="left:521.7px;top:201.0px;" width="13" height="12" viewBox="0 0 13 12"><path d="M6.5 0.5 L12 10.5 H1Z" fill="none" stroke="#555"/></svg>
<svg class="a" style="left:537.9px;top:201.0px;" width="13" height="12" viewBox="0 0 13 12"><path d="M1 1.5 H6 V9.5 H12" fill="none" stroke="#555"/></svg>
<svg class="a" style="left:554.1px;top:201.0px;" width="13" height="12" viewBox="0 0 13 12"><path d="M1 1.5 H6 V9.5 H11" fill="none" stroke="#555"/><path d="M10 8 L12.5 9.5 L10 11Z" fill="#555"/></svg>
<svg class="a" style="left:570.3px;top:201.0px;" width="13" height="12" viewBox="0 0 13 12"><path d="M0.5 3.5 H7 V1 L12 5.5 L7 10 V7.5 H0.5Z" fill="none" stroke="#555"/></svg>
<svg class="a" style="left:586.5px;top:201.0px;" width="13" height="12" viewBox="0 0 13 12"><path d="M3.5 0.5 H9.5 V6 H12 L6.5 11 L1 6 H3.5Z" fill="none" stroke="#555"/></svg>
<svg class="a" style="left:505.5px;top:217.5px;" width="13" height="12" viewBox="0 0 13 12"><path d="M1 10.5 V3 Q1 1 3 1 H8 Q12 1 12 5 V7 H10 V10.5Z" fill="none" stroke="#555"/></svg>
<svg class="a" style="left:521.7px;top:217.5px;" width="13" height="12" viewBox="0 0 13 12"><path d="M5 1 Q8 1 7 4 Q4 6 7 8 Q9 10 6 11" fill="none" stroke="#555"/><circle cx="6" cy="9.5" r="1.5" fill="none" stroke="#555"/></svg>
<svg class="a" style="left:537.9px;top:217.5px;" width="13" height="12" viewBox="0 0 13 12"><path d="M1 2 Q10 2 12 11" fill="none" stroke="#555"/></svg>
<svg class="a" style="left:554.1px;top:217.5px;" width="13" height="12" viewBox="0 0 13 12"><path d="M1 10 Q3 1 6 5 Q9 11 12 8" fill="none" stroke="#555"/></svg>
<svg class="a" style="left:570.3px;top:217.5px;" width="13" height="12" viewBox="0 0 13 12"><path d="M8 0.5 Q5 0.5 5 3 V5 L3 6 L5 7 V9 Q5 11.5 8 11.5" fill="none" stroke="#555" stroke-width="1.2"/></svg>
<svg class="a" style="left:586.5px;top:217.5px;" width="13" height="12" viewBox="0 0 13 12"><path d="M5 0.5 Q8 0.5 8 3 V5 L10 6 L8 7 V9 Q8 11.5 5 11.5" fill="none" stroke="#555" stroke-width="1.2"/></svg>
<svg class="a" style="left:634px;top:183px;" width="23" height="22" viewBox="0 0 23 22"><rect x="0.5" y="0.5" width="10" height="10" fill="#fff" stroke="#999"/><rect x="6" y="6" width="10" height="10" fill="#f0c85a"/><rect x="11.5" y="11.5" width="10" height="10" fill="#fff" stroke="#999"/></svg>
<div class="t" style="left:616.5px;top:211.18px;font-size:9px;color:#2a2a2a;-webkit-text-stroke:0.35px #2a2a2a;;transform:scaleX(1.0735);transform-origin:0 0">Упорядочить</div>
<svg class="a" style="left:644px;top:226px;" width="5" height="3" viewBox="0 0 5 3"><path d="M0 0 H5 L2.5 3Z" fill="#666"/></svg>
<svg class="a" style="left:688px;top:183px;" width="25" height="24" viewBox="0 0 25 24"><rect x="1" y="1" width="18" height="18" rx="4" fill="#f6eef2" stroke="#ccc"/><path d="M24 7 L14 17 L11 22 L16 20 L25 9" fill="#c6c6c6"/></svg>
<div class="t" style="left:678px;top:211.60px;font-size:8.5px;color:#a9a9a9;;transform:scaleX(1.0616);transform-origin:0 0">Экспресс-</div>
<div class="t" style="left:684px;top:224.10px;font-size:8.5px;color:#a9a9a9;;transform:scaleX(1.0615);transform-origin:0 0">стили</div>
<svg class="a" style="left:709px;top:227px;" width="5" height="3" viewBox="0 0 5 3"><path d="M0 0 H5 L2.5 3Z" fill="#c8c8c8"/></svg>
<svg class="a" style="left:726px;top:183px;" width="10" height="10" viewBox="0 0 10 10"><path d="M2 4 L5 1 L9 5 L5 9 L1 5Z" fill="none" stroke="#bbb"/><path d="M4 0 V3" stroke="#bbb"/></svg>
<div class="t" style="left:738.6px;top:184.55px;font-size:8.8px;color:#a9a9a9;;transform:scaleX(1.0716);transform-origin:0 0">Заливка фигуры</div>
<svg class="a" style="left:813px;top:188px;" width="5" height="3" viewBox="0 0 5 3"><path d="M0 0 H5 L2.5 3Z" fill="#ccc"/></svg>
<svg class="a" style="left:724px;top:199px;" width="12" height="10" viewBox="0 0 12 10"><rect x="0.5" y="1.5" width="10" height="8" fill="none" stroke="#bbb"/><path d="M4 7 L11 0.5" stroke="#999" stroke-width="1.5"/></svg>
<div class="t" style="left:739.6px;top:200.55px;font-size:8.8px;color:#a9a9a9;;transform:scaleX(1.0794);transform-origin:0 0">Контур фигуры</div>
<svg class="a" style="left:809px;top:204px;" width="5" height="3" viewBox="0 0 5 3"><path d="M0 0 H5 L2.5 3Z" fill="#ccc"/></svg>
<svg class="a" style="left:724px;top:216px;" width="12" height="10" viewBox="0 0 12 10"><path d="M1 5 L4 1 H11 L8 5 V9 H1Z" fill="#e6e6e6" stroke="#bbb"/></svg>
<div class="t" style="left:738.6px;top:216.95px;font-size:8.8px;color:#a9a9a9;;transform:scaleX(1.0285);transform-origin:0 0">Эффекты фигуры</div>
<svg class="a" style="left:817px;top:220px;" width="5" height="3" viewBox="0 0 5 3"><path d="M0 0 H5 L2.5 3Z" fill="#ccc"/></svg>
<div class="t" style="left:637px;top:237.80px;font-size:8.5px;color:#444;;transform:scaleX(0.9577);transform-origin:0 0">Рисование</div>
<svg class="a" style="left:821px;top:242px;" width="5" height="5" viewBox="0 0 5 5"><path d="M0.5 0.5 H4.5 V4.5" fill="none" stroke="#bbb" stroke-width="0.7"/><path d="M1 1 L4.5 4.5" stroke="#bbb" stroke-width="0.7"/></svg>
<svg class="a" style="left:833px;top:182px;" width="11" height="11" viewBox="0 0 11 11"><circle cx="6.5" cy="4.5" r="3.5" fill="none" stroke="#3b6fb5" stroke-width="1.5"/><path d="M4 7 L1 10" stroke="#3b6fb5" stroke-width="2"/></svg>
<div class="t" style="left:846.6px;top:183.88px;font-size:9px;color:#333;;transform:scaleX(1.0044);transform-origin:0 0">Найти</div>
<svg class="a" style="left:832px;top:200px;" width="12" height="11" viewBox="0 0 12 11"><text x="0" y="5" font-size="6" fill="#444" font-family="Liberation Sans">ab</text><text x="0" y="11" font-size="6" fill="#3b6fb5" font-family="Liberation Sans">ac</text></svg>
<div class="t" style="left:846.6px;top:200.98px;font-size:9px;color:#333;;transform:scaleX(0.9987);transform-origin:0 0">Заменить</div>
<svg class="a" style="left:893px;top:205px;" width="5" height="3" viewBox="0 0 5 3"><path d="M0 0 H5 L2.5 3Z" fill="#666"/></svg>
<svg class="a" style="left:834px;top:216px;" width="9" height="12" viewBox="0 0 9 12"><path d="M0.5 0.5 V10 L3 8 L5 11.5 L6.5 11 L4.8 7.5 L8 7.5Z" fill="#fff" stroke="#777"/></svg>
<div class="t" style="left:846.6px;top:217.38px;font-size:9px;color:#333;;transform:scaleX(0.9728);transform-origin:0 0">Выделить</div>
<svg class="a" style="left:891px;top:221px;" width="5" height="3" viewBox="0 0 5 3"><path d="M0 0 H5 L2.5 3Z" fill="#666"/></svg>
<div class="t" style="left:833.4px;top:238.00px;font-size:8.5px;color:#444;;transform:scaleX(0.9743);transform-origin:0 0">Редактирование</div>
<svg class="a" style="left:922px;top:184px;" width="24" height="24" viewBox="0 0 24 24"><path d="M2 1 H13 L18 6 V22 H2Z" fill="#fff" stroke="#6d8fd0" stroke-width="1.2"/><path d="M6 15 Q9 7 9 5 Q9 11 14 13 Q8 13 6 17" fill="none" stroke="#6d8fd0"/><rect x="12" y="14" width="10" height="4" rx="2" transform="rotate(-45 17 16)" fill="#fff" stroke="#6d8fd0" stroke-width="1.3"/></svg>
<div class="t" style="left:913.6px;top:211.15px;font-size:8.8px;color:#444;;transform:scaleX(1.0557);transform-origin:0 0">Создать</div>
<div class="t" style="left:923px;top:223.85px;font-size:8.8px;color:#444;;transform:scaleX(0.9654);transform-origin:0 0">PDF</div>
<div class="t" style="left:904px;top:238.00px;font-size:8.5px;color:#444;;transform:scaleX(1.0042);transform-origin:0 0">Adobe Acrobat</div>
<svg class="a" style="left:1020px;top:239px;" width="9" height="6" viewBox="0 0 9 6"><path d="M1 5 L4.5 1.5 L8 5" fill="none" stroke="#555" stroke-width="1.2"/></svg>
<div class="a" style="left:156px;top:249px;width:1px;height:406px;background:#d9d9d9;"></div>
<div class="a" style="left:141px;top:251px;width:13px;height:404px;background:#dcdcdc;"></div>
<div class="a" style="left:141px;top:251px;width:13px;height:12px;background:#fff;"></div>
<svg class="a" style="left:144px;top:255px;" width="7" height="4" viewBox="0 0 7 4"><path d="M0 4 L3.5 0 L7 4Z" fill="#555"/></svg>
<div class="a" style="left:141px;top:366px;width:13px;height:198px;background:#fff;"></div>
<div class="a" style="left:29px;top:265px;width:97px;height:55px;overflow:hidden;background:linear-gradient(#fff 20%,#bfe0f7 95%)"><div class="a" style="left:0px;top:0px;width:97px;height:2.5px;background:#0b3f77;"></div><div class="a" style="left:0px;top:52.5px;width:97px;height:2.5px;background:#0b3f77;"></div><svg class="a" style="left:3px;top:0px;" width="20" height="3" viewBox="0 0 20 3"><path d="M0 2.5 L20 0 L6 3Z" fill="#9cd0f0"/></svg><div class="a" style="left:24px;top:5px;width:50px;height:4px;background:#4d7fd4;"></div><div class="a" style="left:4px;top:11px;width:30px;height:1px;background:#a5a5a5;"></div><div class="a" style="left:4px;top:14px;width:40px;height:1px;background:#a5a5a5;"></div><div class="a" style="left:4px;top:17px;width:40px;height:1px;background:#a5a5a5;"></div><div class="a" style="left:4px;top:20px;width:30px;height:1px;background:#a5a5a5;"></div><div class="a" style="left:4px;top:23px;width:40px;height:1px;background:#a5a5a5;"></div><div class="a" style="left:4px;top:26px;width:40px;height:1px;background:#a5a5a5;"></div><div class="a" style="left:4px;top:29px;width:30px;height:1px;background:#a5a5a5;"></div><div class="a" style="left:4px;top:32px;width:40px;height:1px;background:#a5a5a5;"></div><div class="a" style="left:4px;top:35px;width:40px;height:1px;background:#a5a5a5;"></div><div class="a" style="left:46px;top:24px;width:50px;height:28px;background:#dff0f8;"></div><div class="a" style="left:50px;top:33px;width:22px;height:8px;background:#2aa8e0;border-radius:3px"></div><svg class="a" style="left:70px;top:26px;" width="26" height="26" viewBox="0 0 26 26"><path d="M2 26 L8 8 L12 20 L16 4 L20 22 L24 12 L26 26Z" fill="#8fb3d9"/><circle cx="8" cy="6" r="3" fill="#f4d35e"/><path d="M4 24 L14 16 L22 24Z" fill="#e8c460"/></svg></div>
<div class="a" style="left:29px;top:336.5px;width:97px;height:55px;overflow:hidden;background:linear-gradient(#fff 20%,#bfe0f7 95%)"><div class="a" style="left:0px;top:0px;width:97px;height:2.5px;background:#0b3f77;"></div><div class="a" style="left:0px;top:52.5px;width:97px;height:2.5px;background:#0b3f77;"></div><svg class="a" style="left:3px;top:0px;" width="20" height="3" viewBox="0 0 20 3"><path d="M0 2.5 L20 0 L6 3Z" fill="#9cd0f0"/></svg><div class="a" style="left:23px;top:7px;width:52px;height:3px;background:#4d7fd4;"></div><div class="a" style="left:18px;top:12px;width:62px;height:1px;background:#777;"></div><div class="a" style="left:18px;top:14px;width:62px;height:1px;background:#777;"></div><div class="a" style="left:23px;top:17px;width:52px;height:3px;background:#4d7fd4;"></div><div class="a" style="left:40px;top:22px;width:18px;height:1px;background:#a5a5a5;"></div><div class="a" style="left:35px;top:24px;width:28px;height:1px;background:#a5a5a5;"></div><div class="a" style="left:20px;top:27px;width:56px;height:22px;background:#3a6a9a;border-radius:2px"></div><div class="a" style="left:20px;top:27px;width:28px;height:22px;background:#506878;"></div><div class="a" style="left:48px;top:27px;width:28px;height:22px;background:#2a9ad8;"></div><div class="a" style="left:26px;top:30px;width:8px;height:8px;background:#c9a080;border-radius:50%"></div><div class="a" style="left:55px;top:30px;width:12px;height:14px;background:#8fd3f5;border-radius:50%;opacity:.7"></div></div>
<div class="a" style="left:29px;top:408px;width:97px;height:55px;overflow:hidden;background:linear-gradient(#fff 20%,#bfe0f7 95%)"><div class="a" style="left:0px;top:0px;width:97px;height:2.5px;background:#0b3f77;"></div><div class="a" style="left:0px;top:52.5px;width:97px;height:2.5px;background:#0b3f77;"></div><svg class="a" style="left:3px;top:0px;" width="20" height="3" viewBox="0 0 20 3"><path d="M0 2.5 L20 0 L6 3Z" fill="#9cd0f0"/></svg><div class="a" style="left:13px;top:5px;width:44px;height:4px;background:#4d7fd4;"></div><div class="a" style="left:4px;top:11.0px;width:60px;height:1px;background:#9ca0a8;"></div><div class="a" style="left:4px;top:12.95px;width:60px;height:1px;background:#b4b8c0;"></div><div class="a" style="left:4px;top:14.9px;width:60px;height:1px;background:#9ca0a8;"></div><div class="a" style="left:4px;top:16.85px;width:60px;height:1px;background:#b4b8c0;"></div><div class="a" style="left:4px;top:18.8px;width:60px;height:1px;background:#9ca0a8;"></div><div class="a" style="left:4px;top:20.75px;width:60px;height:1px;background:#b4b8c0;"></div><div class="a" style="left:4px;top:22.7px;width:60px;height:1px;background:#9ca0a8;"></div><div class="a" style="left:4px;top:24.65px;width:60px;height:1px;background:#b4b8c0;"></div><div class="a" style="left:4px;top:26.6px;width:60px;height:1px;background:#9ca0a8;"></div><div class="a" style="left:4px;top:28.55px;width:60px;height:1px;background:#b4b8c0;"></div><div class="a" style="left:4px;top:30.5px;width:60px;height:1px;background:#9ca0a8;"></div><div class="a" style="left:4px;top:32.45px;width:60px;height:1px;background:#b4b8c0;"></div><div class="a" style="left:4px;top:34.4px;width:60px;height:1px;background:#9ca0a8;"></div><div class="a" style="left:4px;top:36.349999999999994px;width:60px;height:1px;background:#b4b8c0;"></div><div class="a" style="left:4px;top:38.3px;width:60px;height:1px;background:#9ca0a8;"></div><div class="a" style="left:4px;top:40.25px;width:60px;height:1px;background:#b4b8c0;"></div><div class="a" style="left:66px;top:8px;width:26px;height:37px;background:#5a7aa0;"></div><div class="a" style="left:72px;top:14px;width:12px;height:10px;background:#c9a07c;border-radius:50%"></div><div class="a" style="left:70px;top:24px;width:17px;height:21px;background:#e0d6bf;border-radius:5px 5px 0 0"></div></div>
<div class="a" style="left:26.5px;top:477.5px;width:100.5px;height:59px;background:#ee8a70;"></div>
<div class="a" style="left:28.5px;top:479.5px;width:96.5px;height:55px;background:#fff;"></div>
<div class="a" style="left:29px;top:480px;width:96px;height:54px;overflow:hidden;background:linear-gradient(#fff 20%,#bfe0f7 95%)"><div class="a" style="left:0px;top:0px;width:96px;height:2.5px;background:#0b3f77;"></div><div class="a" style="left:0px;top:51.5px;width:96px;height:2.5px;background:#0b3f77;"></div><svg class="a" style="left:3px;top:0px;" width="20" height="3" viewBox="0 0 20 3"><path d="M0 2.5 L20 0 L6 3Z" fill="#9cd0f0"/></svg><div class="a" style="left:13px;top:5px;width:44px;height:4px;background:#4d7fd4;"></div><div class="a" style="left:4px;top:11.0px;width:58px;height:1px;background:#9ca0a8;"></div><div class="a" style="left:4px;top:12.95px;width:58px;height:1px;background:#b4b8c0;"></div><div class="a" style="left:4px;top:14.9px;width:58px;height:1px;background:#9ca0a8;"></div><div class="a" style="left:4px;top:16.85px;width:58px;height:1px;background:#b4b8c0;"></div><div class="a" style="left:4px;top:18.8px;width:58px;height:1px;background:#9ca0a8;"></div><div class="a" style="left:4px;top:20.75px;width:58px;height:1px;background:#b4b8c0;"></div><div class="a" style="left:4px;top:22.7px;width:58px;height:1px;background:#9ca0a8;"></div><div class="a" style="left:4px;top:24.65px;width:58px;height:1px;background:#b4b8c0;"></div><div class="a" style="left:4px;top:26.6px;width:58px;height:1px;background:#9ca0a8;"></div><div class="a" style="left:4px;top:28.55px;width:58px;height:1px;background:#b4b8c0;"></div><div class="a" style="left:4px;top:30.5px;width:58px;height:1px;background:#9ca0a8;"></div><div class="a" style="left:4px;top:32.45px;width:58px;height:1px;background:#b4b8c0;"></div><div class="a" style="left:4px;top:34.4px;width:58px;height:1px;background:#9ca0a8;"></div><div class="a" style="left:4px;top:36.349999999999994px;width:58px;height:1px;background:#b4b8c0;"></div><div class="a" style="left:4px;top:38.3px;width:58px;height:1px;background:#9ca0a8;"></div><div class="a" style="left:4px;top:40.25px;width:58px;height:1px;background:#b4b8c0;"></div><div class="a" style="left:4px;top:42.2px;width:58px;height:1px;background:#9ca0a8;"></div><div class="a" style="left:66px;top:26px;width:30px;height:22px;background:#4f8a3a;"></div><div class="a" style="left:66px;top:26px;width:30px;height:7px;background:#5a90d8;"></div><div class="a" style="left:67px;top:36px;width:8px;height:9px;background:#6a4a38;border-radius:50%"></div><div class="a" style="left:76px;top:34px;width:8px;height:10px;background:#e8e2d6;border-radius:50%"></div><div class="a" style="left:85px;top:37px;width:8px;height:8px;background:#c08a6a;border-radius:50%"></div><div class="a" style="left:86px;top:44px;width:10px;height:4px;background:#e05020;"></div></div>
<div class="a" style="left:29px;top:551.5px;width:97px;height:55px;overflow:hidden;background:linear-gradient(#fff 20%,#bfe0f7 95%)"><div class="a" style="left:0px;top:0px;width:97px;height:2.5px;background:#0b3f77;"></div><div class="a" style="left:0px;top:52.5px;width:97px;height:2.5px;background:#0b3f77;"></div><svg class="a" style="left:3px;top:0px;" width="20" height="3" viewBox="0 0 20 3"><path d="M0 2.5 L20 0 L6 3Z" fill="#9cd0f0"/></svg><div class="a" style="left:13px;top:5px;width:44px;height:4px;background:#4d7fd4;"></div><div class="a" style="left:4px;top:11.0px;width:58px;height:1px;background:#9ca0a8;"></div><div class="a" style="left:4px;top:12.95px;width:58px;height:1px;background:#b4b8c0;"></div><div class="a" style="left:4px;top:14.9px;width:58px;height:1px;background:#9ca0a8;"></div><div class="a" style="left:4px;top:16.85px;width:58px;height:1px;background:#b4b8c0;"></div><div class="a" style="left:4px;top:18.8px;width:58px;height:1px;background:#9ca0a8;"></div><div class="a" style="left:4px;top:20.75px;width:58px;height:1px;background:#b4b8c0;"></div><div class="a" style="left:4px;top:22.7px;width:58px;height:1px;background:#9ca0a8;"></div><div class="a" style="left:4px;top:24.65px;width:58px;height:1px;background:#b4b8c0;"></div><div class="a" style="left:4px;top:26.6px;width:58px;height:1px;background:#9ca0a8;"></div><div class="a" style="left:4px;top:28.55px;width:58px;height:1px;background:#b4b8c0;"></div><div class="a" style="left:4px;top:30.5px;width:58px;height:1px;background:#9ca0a8;"></div><div class="a" style="left:4px;top:32.45px;width:58px;height:1px;background:#b4b8c0;"></div><div class="a" style="left:4px;top:34.4px;width:58px;height:1px;background:#9ca0a8;"></div><div class="a" style="left:4px;top:36.349999999999994px;width:58px;height:1px;background:#b4b8c0;"></div><div class="a" style="left:4px;top:38.3px;width:58px;height:1px;background:#9ca0a8;"></div><div class="a" style="left:4px;top:40.25px;width:58px;height:1px;background:#b4b8c0;"></div><div class="a" style="left:4px;top:42.2px;width:58px;height:1px;background:#9ca0a8;"></div><div class="a" style="left:62px;top:7px;width:30px;height:35px;background:#8a98a8;"></div><div class="a" style="left:62px;top:7px;width:12px;height:20px;background:#3a4a60;"></div><div class="a" style="left:64px;top:24px;width:12px;height:10px;background:#4a3828;border-radius:50%"></div><div class="a" style="left:63px;top:30px;width:26px;height:12px;background:#2a2a30;"></div><div class="a" style="left:78px;top:12px;width:8px;height:10px;background:#6a6050;border-radius:50%"></div></div>
<div class="a" style="left:29px;top:623.5px;width:97px;height:55px;overflow:hidden;background:linear-gradient(#fff 20%,#bfe0f7 95%)"><div class="a" style="left:0px;top:0px;width:97px;height:2.5px;background:#0b3f77;"></div><div class="a" style="left:0px;top:52.5px;width:97px;height:2.5px;background:#0b3f77;"></div><svg class="a" style="left:3px;top:0px;" width="20" height="3" viewBox="0 0 20 3"><path d="M0 2.5 L20 0 L6 3Z" fill="#9cd0f0"/></svg><div class="a" style="left:52px;top:20px;width:28px;height:35px;background:#2a2e36;"></div></div>
<div class="t" style="left:9.5px;top:262.84px;font-size:12px;color:#707070;-webkit-text-stroke:0;;transform:scaleX(0.9720);transform-origin:0 0">4</div>
<div class="t" style="left:9.5px;top:334.34px;font-size:12px;color:#707070;-webkit-text-stroke:0;;transform:scaleX(0.9720);transform-origin:0 0">5</div>
<div class="t" style="left:9.5px;top:405.84px;font-size:12px;color:#707070;-webkit-text-stroke:0;;transform:scaleX(0.9720);transform-origin:0 0">6</div>
<div class="t" style="left:9.5px;top:477.34px;font-size:12px;color:#d8553a;-webkit-text-stroke:0;;transform:scaleX(0.9720);transform-origin:0 0">7</div>
<div class="t" style="left:9.5px;top:549.34px;font-size:12px;color:#707070;-webkit-text-stroke:0;;transform:scaleX(0.9720);transform-origin:0 0">8</div>
<div class="t" style="left:9.5px;top:621.34px;font-size:12px;color:#707070;-webkit-text-stroke:0;;transform:scaleX(0.9720);transform-origin:0 0">9</div>
<div class="a" style="left:24px;top:604px;width:88px;height:43px;background:#262626;border-radius:2px"></div>
<svg class="a" style="left:39px;top:646px;" width="10" height="6" viewBox="0 0 10 6"><path d="M0 0 H10 L5 6Z" fill="#262626"/></svg>
<div class="t" style="left:34.3px;top:614.51px;font-size:9.2px;color:#fff;;transform:scaleX(0.9348);transform-origin:0 0">Нажмите, чтобы</div>
<div class="t" style="left:34.3px;top:625.51px;font-size:9.2px;color:#fff;;transform:scaleX(0.9518);transform-origin:0 0">подключить звук</div>
<div class="a" style="left:158px;top:618px;width:862px;height:1px;background:#cfcfcf;"></div>
<div class="t" style="left:166px;top:626.39px;font-size:11px;color:#6a6a6a;;transform:scaleX(1.0679);transform-origin:0 0">Щелкните, чтобы добавить заметки</div>
<div class="a" style="left:1020px;top:251px;width:14px;height:370px;background:#dcdcdc;"></div>
<div class="a" style="left:1021px;top:252px;width:12px;height:11px;background:#fff;"></div>
<svg class="a" style="left:1024px;top:255px;" width="7" height="4" viewBox="0 0 7 4"><path d="M0 4 L3.5 0 L7 4Z" fill="#555"/></svg>
<div class="a" style="left:1021px;top:414px;width:12px;height:18px;background:#fff;"></div>
<div class="a" style="left:1021px;top:562px;width:12px;height:11px;background:#fff;"></div>
<svg class="a" style="left:1024px;top:566px;" width="7" height="4" viewBox="0 0 7 4"><path d="M0 0 H7 L3.5 4Z" fill="#555"/></svg>
<svg class="a" style="left:1024px;top:578px;" width="7" height="8" viewBox="0 0 7 8"><path d="M0 4 L3.5 0 L7 4Z M0 8 L3.5 4 L7 8Z" fill="#555"/></svg>
<svg class="a" style="left:1024px;top:590px;" width="7" height="8" viewBox="0 0 7 8"><path d="M0 0 H7 L3.5 4Z M0 4 H7 L3.5 8Z" fill="#555"/></svg>
<div class="a" style="left:1035px;top:126px;width:5px;height:529px;background:#111;"></div>
<div class="a" style="left:277px;top:253px;width:625px;height:352px;background:linear-gradient(180deg,#ffffff 0%,#ffffff 18%,#f4f9fd 40%,#d6ebf9 65%,#b5dcf5 92%,#b0daf4 100%);box-shadow:0 0 0 1px #d4d4d4"></div>
<div class="a" style="left:277px;top:253px;width:625px;height:20px;background:#073e78;"></div>
<svg class="a" style="left:295px;top:253px;" width="70" height="20" viewBox="0 0 70 20"><path d="M1 10.5 L69 0 L17 19.5Z" fill="#9fd4f4"/></svg>
<div class="a" style="left:277px;top:585px;width:625px;height:20px;background:#073e78;"></div>
<svg class="a" style="left:760px;top:585px;" width="125" height="14" viewBox="0 0 125 14"><path d="M0 1 L80 3 L124 8 L50 5Z" fill="#bfe3f8"/><path d="M12 7 L110 9 L70 13Z" fill="#9fd4f4"/></svg>
<div class="a" style="left:303px;top:285.6px;width:348px;height:22.3px;background:linear-gradient(180deg,#6494e2 0%,#4a7bd3 45%,#3563bd 100%);box-shadow:1px 2px 2px rgba(60,60,90,.45)"></div>
<div class="t" style="left:326px;top:289.80px;font-size:13px;color:#fff;font-weight:bold;font-family:'Liberation Serif',serif;;transform:scaleX(0.9993);transform-origin:0 0">ВІДГУКИ ПРО ПРОГРАМИ ВІД СТУДЕНТІВ ХАІ</div>
<div class="t" style="left:286px;top:587.30px;font-size:15px;color:#fff;font-weight:bold;;transform:scaleX(1.0787);transform-origin:0 0">4</div>
<svg class="a" style="left:355px;top:588px;" width="32" height="15" viewBox="0 0 32 15"><path d="M0 0 H6 L9 5 L12 0 H17 L11.5 7.5 L17 15 H11 L8.5 10.5 L6 15 H0 L5.5 7.5Z" fill="#fff"/><path d="M12 15 L20 0.5 H27 L27 15 H22 V11.5 H19.5 L17.5 15Z M22 8 V5 L20.5 8Z" fill="#fff" fill-rule="evenodd"/><path d="M23 15 L29 2.5 V15Z" fill="#fff"/><path d="M20 13 L27 3 L27 8Z" fill="#9aa8b8"/><path d="M27 1 L32 0 L29 3Z" fill="#7ac4ee"/></svg>
<div class="t" style="left:392.5px;top:589.76px;font-size:5.6px;color:#fff;font-weight:bold;;transform:scaleX(1.0495);transform-origin:0 0">НАЦІОНАЛЬНИЙ АЕРОКОСМІЧНИЙ УНІВЕРСИТЕТ</div>
<div class="t" style="left:392.5px;top:596.76px;font-size:5.6px;color:#fff;font-weight:bold;;transform:scaleX(1.0464);transform-origin:0 0">«ХАРКІВСЬКИЙ АВІАЦІЙНИЙ ІНСТИТУТ»</div>
<div class="t" style="left:297.4px;top:326.89px;font-size:11px;color:#2e2e2e;-webkit-text-stroke:0.15px #2e2e2e;;transform:scaleX(0.9297);transform-origin:0 0">Досвід участі <b>Руслана</b> у програмі <b>Erasmus+ у Ризькому технічному університеті</b></div>
<div class="t" style="left:297.4px;top:340.99px;font-size:11px;color:#2e2e2e;-webkit-text-stroke:0.15px #2e2e2e;;transform:scaleX(0.9665);transform-origin:0 0"><b>(Латвія)</b>, що тривав із лютого по червень, став для нього надзвичайно</div>
<div class="t" style="left:297.4px;top:355.09px;font-size:11px;color:#2e2e2e;-webkit-text-stroke:0.15px #2e2e2e;;transform:scaleX(0.9793);transform-origin:0 0">насиченим і незабутнім. Під час навчання він познайомився зі студентами з</div>
<div class="t" style="left:297.4px;top:369.19px;font-size:11px;color:#2e2e2e;-webkit-text-stroke:0.15px #2e2e2e;;transform:scaleX(0.9681);transform-origin:0 0">різних країн світу — зокрема з Японії, Кореї, Іспанії та Лівії — і завів нових</div>
<div class="t" style="left:297.4px;top:383.29px;font-size:11px;color:#2e2e2e;-webkit-text-stroke:0.15px #2e2e2e;;transform:scaleX(0.9768);transform-origin:0 0">друзів. Це дало можливість не лише вдосконалити англійську мову, а й краще</div>
<div class="t" style="left:297.4px;top:397.39px;font-size:11px;color:#2e2e2e;-webkit-text-stroke:0.15px #2e2e2e;;transform:scaleX(0.9821);transform-origin:0 0">пізнати різноманіття культур і традицій.</div>
<div class="t" style="left:297.4px;top:411.49px;font-size:11px;color:#2e2e2e;-webkit-text-stroke:0.15px #2e2e2e;;transform:scaleX(0.9798);transform-origin:0 0">У вільний від навчання час Руслан активно подорожував, відвідавши Краків,</div>
<div class="t" style="left:297.4px;top:425.59px;font-size:11px;color:#2e2e2e;-webkit-text-stroke:0.15px #2e2e2e;;transform:scaleX(0.9684);transform-origin:0 0">Таллінн і Вільнюс. Він також багато мандрував Латвією — особливо</div>
<div class="t" style="left:297.4px;top:439.69px;font-size:11px;color:#2e2e2e;-webkit-text-stroke:0.15px #2e2e2e;;transform:scaleX(0.9655);transform-origin:0 0">запам’яталися <b class="sp">Юрмала</b> з її морськими краєвидами та <b class="sp">Сігулда</b> з мальовничою</div>
<div class="t" style="left:297.4px;top:453.79px;font-size:11px;color:#2e2e2e;-webkit-text-stroke:0.15px #2e2e2e;;transform:scaleX(0.9865);transform-origin:0 0">природою і замками. Ці подорожі стали невід’ємною частиною його досвіду та</div>
<div class="t" style="left:297.4px;top:467.89px;font-size:11px;color:#2e2e2e;-webkit-text-stroke:0.15px #2e2e2e;;transform:scaleX(0.9753);transform-origin:0 0">допомогли глибше відчути культуру країни.</div>
<div class="t" style="left:297.4px;top:481.99px;font-size:11px;color:#2e2e2e;-webkit-text-stroke:0.15px #2e2e2e;;transform:scaleX(0.9658);transform-origin:0 0">Загалом період навчання у Ризі став для Руслана важливим етапом розвитку,</div>
<div class="t" style="left:297.4px;top:496.09px;font-size:11px;color:#2e2e2e;-webkit-text-stroke:0.15px #2e2e2e;;transform:scaleX(0.9688);transform-origin:0 0"><span class="sp">відкриттів</span> і нових знайомств. Програма <b>Erasmus+</b> розширила його світогляд,</div>
<div class="t" style="left:297.4px;top:510.19px;font-size:11px;color:#2e2e2e;-webkit-text-stroke:0.15px #2e2e2e;;transform:scaleX(0.9832);transform-origin:0 0">дала цінний міжнародний досвід і залишила спогади, які надихатимуть у</div>
<div class="t" style="left:297.4px;top:524.29px;font-size:11px;color:#2e2e2e;-webkit-text-stroke:0.15px #2e2e2e;;transform:scaleX(1.0878);transform-origin:0 0">майбутньому.</div>
<svg class="a" style="left:698px;top:419px;box-shadow:3px 4px 6px rgba(40,60,90,.45)" width="200" height="150" viewBox="0 0 200 150">
<defs>
<linearGradient id="sky" x1="0" y1="0" x2="0" y2="1"><stop offset="0" stop-color="#2d6ad2"/><stop offset="1" stop-color="#7eaee8"/></linearGradient>
<linearGradient id="pond" x1="0" y1="0" x2="0" y2="1"><stop offset="0" stop-color="#2e4f86"/><stop offset="0.6" stop-color="#5a7eb5"/><stop offset="1" stop-color="#3a4a60"/></linearGradient>
<filter id="bl" x="-20%" y="-20%" width="140%" height="140%"><feGaussianBlur stdDeviation="1.5"/></filter>
<filter id="bl2" x="-20%" y="-20%" width="140%" height="140%"><feGaussianBlur stdDeviation="0.7"/></filter>
</defs>
<rect width="200" height="150" fill="#4f7a45"/>
<rect width="200" height="48" fill="url(#sky)"/>
<g filter="url(#bl)">
<ellipse cx="55" cy="12" rx="32" ry="5" fill="#eef2f8" opacity=".85"/>
<ellipse cx="90" cy="19" rx="25" ry="3.5" fill="#e4ebf5" opacity=".8"/>
<ellipse cx="60" cy="26" rx="22" ry="3.5" fill="#e6edf7" opacity=".7"/>
<ellipse cx="6" cy="19" rx="10" ry="4" fill="#e8eef8" opacity=".7"/>
<ellipse cx="75" cy="4" rx="30" ry="3" fill="#d6e2f3" opacity=".6"/>
</g>
<g filter="url(#bl2)">
<path d="M0 28 L10 27 L22 31 L40 32 L48 38 L55 42 L55 58 L0 58Z" fill="#e6d8bf"/>
<path d="M8 28 L20 27 L42 31 L48 36 L20 35Z" fill="#b4553e"/>
<path d="M10 37 H52 V48 H10Z" fill="#d9bf9f"/>
<rect x="20" y="40" width="3" height="4" fill="#7a5a40"/><rect x="30" y="40" width="3" height="4" fill="#7a5a40"/><rect x="40" y="40" width="3" height="4" fill="#7a5a40"/>
<path d="M58 30 Q63 18 68 30 L69 53 L57 53Z" fill="#2d5a28"/>
<path d="M66 40 Q72 28 88 32 Q96 22 112 28 Q126 20 140 28 L142 56 L66 56Z" fill="#4a8536"/>
<path d="M85 28 Q93 16 102 26 L101 50 L85 50Z" fill="#7d9a6e"/>
<path d="M130 15 Q145 0 168 4 Q190 -4 200 6 L200 52 L132 54Z" fill="#4e8439"/>
<path d="M150 8 Q172 -2 192 12 L182 28 Q162 22 150 32Z" fill="#8fae72" opacity=".6"/>
<path d="M0 54 Q40 52 80 49 Q130 44 200 47 L200 60 Q140 54 90 57 L60 60 L0 64Z" fill="#6caa46"/>
<path d="M50 60 Q110 50 200 55 L200 100 Q150 96 120 104 L60 110Z" fill="url(#pond)"/>
<path d="M120 58 Q160 56 198 64 L198 90 Q160 84 130 82Z" fill="#6a8ec4" opacity=".55"/>
<path d="M0 60 L58 58 Q68 66 58 76 Q48 88 30 100 L0 108Z" fill="#6aa440"/>
<path d="M172 88 Q188 80 200 78 L200 150 L170 150Z" fill="#4b8d36"/>
<rect x="8" y="62" width="8" height="7" fill="#3a3a30"/>
</g>
<g filter="url(#bl2)">
<!-- person 1 -->
<path d="M0 112 Q12 108 28 112 Q40 114 48 120 L50 150 L0 150Z" fill="#4a2b22"/>
<ellipse cx="25" cy="100" rx="19" ry="22" fill="#c48a5f"/>
<path d="M5 92 Q4 66 28 66 Q52 68 50 94 Q44 80 30 83 Q14 83 5 92Z" fill="#181210"/>
<path d="M16 112 Q25 117 34 112 Q25 121 16 112Z" fill="#3a2218"/>
<path d="M13 98 H21 M28 98 H36" stroke="#3a2a22" stroke-width="1.2"/>
<!-- person 2 -->
<path d="M22 150 Q30 126 60 118 L85 108 L120 110 Q140 118 145 150Z" fill="#e5dccb"/>
<path d="M75 112 L88 106 L92 150 L74 150Z" fill="#3a4458"/>
<path d="M118 110 L128 114 L134 150 L122 150Z" fill="#3a4458"/>
<path d="M76 126 Q70 70 84 60 Q97 50 110 60 Q124 72 118 126 Q106 136 92 136Z" fill="#e0d8c8"/>
<ellipse cx="97" cy="91" rx="15" ry="21" fill="#d9a98a"/>
<path d="M82 85 Q83 69 97 69 Q112 69 113 85 Q106 77 97 77 Q89 77 82 85Z" fill="#2a2220"/>
<path d="M86 90 H95 M99 90 H108" stroke="#666" stroke-width="1"/>
<path d="M90 102 Q97 107 104 102" stroke="#fff" stroke-width="1.6" fill="none"/>
<path d="M94 124 L101 150 L110 124Z" fill="#f4f4f2"/>
<!-- person 3 -->
<path d="M148 150 L150 124 Q165 114 185 118 Q200 122 200 150Z" fill="#e5481a"/>
<path d="M160 124 L178 120 L196 134 L175 150 L158 150Z" fill="#ff6a2a" opacity=".8"/>
<ellipse cx="156" cy="118" rx="17" ry="18" fill="#e0ae8c"/>
<path d="M137 104 Q136 82 157 82 Q179 82 178 104 Q157 97 137 104Z" fill="#1d2440"/>
<path d="M139 96 Q157 90 176 96" stroke="#c9c0d0" stroke-width="2" fill="none" stroke-dasharray="2 1.5"/>
<path d="M142 111 H153 M158 111 H170" stroke="#555" stroke-width="1"/>
<path d="M149 122 Q156 126 163 122" stroke="#fff" stroke-width="1.4" fill="none"/>
</g>
</svg>
<div class="a" style="left:1036px;top:30px;width:244px;height:663px;background:#0a0a0a;"></div>
<div class="a" style="left:1040px;top:32.5px;width:236.5px;height:219.5px;background:#fff;border-radius:6px;overflow:hidden"></div>
<div class="a" style="left:1040px;top:32.5px;width:236.5px;height:31.7px;background:#edf0f4;border-radius:6px 6px 0 0"></div>
<div class="t" style="left:1109.5px;top:45.46px;font-size:9.5px;color:#222;font-weight:bold;;transform:scaleX(0.9114);transform-origin:0 0">Участники (18)</div>
<svg class="a" style="left:1240px;top:45px;" width="10" height="10" viewBox="0 0 10 10"><path d="M4.5 1 H1 V9 H9 V5.5" fill="none" stroke="#555" stroke-width="1.1"/><path d="M5 5 L9 1 M6 1 H9 V4" fill="none" stroke="#555" stroke-width="1.1"/></svg>
<svg class="a" style="left:1258.5px;top:45.5px;" width="8" height="8" viewBox="0 0 8 8"><path d="M0.5 0.5 L7.5 7.5 M7.5 0.5 L0.5 7.5" stroke="#555" stroke-width="1.1"/></svg>
<div class="a" style="left:1055px;top:71.5px;width:208.5px;height:20.8px;background:#fff;border:1px solid #c9ccd1;border-radius:6px"></div>
<svg class="a" style="left:1062px;top:77px;" width="9" height="9" viewBox="0 0 9 9"><circle cx="3.8" cy="3.8" r="3" fill="none" stroke="#777" stroke-width="1"/><path d="M6 6 L8.5 8.5" stroke="#777" stroke-width="1.1"/></svg>
<div class="t" style="left:1073.7px;top:77.63px;font-size:9.3px;color:#666;;transform:scaleX(0.8902);transform-origin:0 0">Найти участника</div>
<div class="a" style="left:1057px;top:99px;width:17.5px;height:17.5px;border-radius:3px;background:#eef3f7;overflow:hidden"><svg width="18" height="18" viewBox="0 0 18 18"><circle cx="9" cy="9" r="8" fill="none" stroke="#6a7fc0" stroke-width="1"/><path d="M5 13 H10 L7 7 L9 4 H13 L14 7" fill="none" stroke="#2aa3a8" stroke-width="2"/></svg></div>
<div class="t" style="left:1083px;top:103.13px;font-size:9.3px;color:#333;;transform:scaleX(0.9205);transform-origin:0 0">Кафедра мехатроніки та електротехніки (Я)</div>
<div class="a" style="left:1057px;top:126px;width:17.5px;height:17.5px;border-radius:3px;overflow:hidden;background:repeating-linear-gradient(90deg,#a07a58 0 2px,#5a4030 2px 3px)"><div class="a" style="left:6px;top:3px;width:6px;height:8px;border-radius:50%;background:#e0c0a0"></div><div class="a" style="left:3px;top:10px;width:12px;height:9px;border-radius:40% 40% 0 0;background:#1a1a1a"></div></div>
<div class="t" style="left:1083px;top:130.43px;font-size:9.3px;color:#333;;transform:scaleX(0.8600);transform-origin:0 0">Dana Turch...</div>
<div class="t" style="left:1139.5px;top:130.43px;font-size:9.3px;color:#333;;transform:scaleX(0.9211);transform-origin:0 0">(Организатор)</div>
<div class="a" style="left:1199.5px;top:131px;width:11px;height:8px;background:#12a150;border-radius:1px"></div>
<svg class="a" style="left:1201.5px;top:132px;" width="7" height="6" viewBox="0 0 7 6"><path d="M3.5 0.5 V5.5 M1 3 L3.5 0.5 L6 3" stroke="#fff" stroke-width="1.1" fill="none"/></svg>
<svg class="a" style="left:1215px;top:129.5px;" width="10" height="10" viewBox="0 0 10 10"><circle cx="5" cy="5" r="4.3" fill="none" stroke="#e04343" stroke-width="0.9"/><circle cx="5" cy="5" r="2" fill="#e04343"/></svg>
<svg class="a" style="left:1232px;top:128px;" width="8" height="12" viewBox="0 0 8 12"><rect x="2.3" y="0.5" width="3.4" height="7" rx="1.7" fill="#888"/><path d="M0.8 5 Q0.8 9 4 9 Q7.2 9 7.2 5 M4 9 V11.5" stroke="#888" stroke-width="0.9" fill="none"/></svg>
<svg class="a" style="left:1246.5px;top:129px;" width="13" height="11" viewBox="0 0 13 11"><rect x="0.5" y="2" width="8.5" height="7.5" rx="1" fill="none" stroke="#e04343" stroke-width="0.9"/><path d="M9 5 L12.5 3 V8.5 L9 6.5" fill="none" stroke="#e04343" stroke-width="0.9"/><path d="M1 10.5 L11 0.5" stroke="#e04343" stroke-width="1"/></svg>
<div class="a" style="left:1057px;top:153px;width:17.5px;height:17.5px;border-radius:3px;overflow:hidden;background:#d7c3b0"><div class="a" style="left:3px;top:1px;width:12px;height:16px;border-radius:50%;background:#3a2418"></div><div class="a" style="left:6px;top:4px;width:6.5px;height:9px;border-radius:50%;background:#e8c0a0"></div></div>
<div class="t" style="left:1083px;top:157.63px;font-size:9.3px;color:#333;;transform:scaleX(0.9435);transform-origin:0 0">Alina Artomova</div>
<svg class="a" style="left:1232px;top:156px;" width="9" height="12" viewBox="0 0 9 12"><rect x="2.5" y="0.5" width="3.4" height="7" rx="1.7" fill="none" stroke="#e04343" stroke-width="0.9"/><path d="M0.8 5 Q0.8 9 4.2 9 Q7.6 9 7.6 5 M4.2 9 V11.5" stroke="#e04343" stroke-width="0.9" fill="none"/><path d="M0.5 11 L8.5 0.5" stroke="#e04343" stroke-width="1"/></svg>
<svg class="a" style="left:1246.5px;top:157px;" width="13" height="11" viewBox="0 0 13 11"><rect x="0.5" y="2" width="8.5" height="7.5" rx="1" fill="none" stroke="#e04343" stroke-width="0.9"/><path d="M9 5 L12.5 3 V8.5 L9 6.5" fill="none" stroke="#e04343" stroke-width="0.9"/><path d="M1 10.5 L11 0.5" stroke="#e04343" stroke-width="1"/></svg>
<div class="a" style="left:1057px;top:180.5px;width:17.5px;height:17.5px;background:#8a3fbf;border-radius:3px"></div>
<div class="t" style="left:1062.5px;top:185.18px;font-size:9px;color:#fff;font-weight:bold;;transform:scaleX(1.0909);transform-origin:0 0">L</div>
<div class="t" style="left:1083px;top:184.63px;font-size:9.3px;color:#333;;transform:scaleX(0.8060);transform-origin:0 0">LG</div>
<svg class="a" style="left:1232px;top:183px;" width="9" height="12" viewBox="0 0 9 12"><rect x="2.5" y="0.5" width="3.4" height="7" rx="1.7" fill="none" stroke="#e04343" stroke-width="0.9"/><path d="M0.8 5 Q0.8 9 4.2 9 Q7.6 9 7.6 5 M4.2 9 V11.5" stroke="#e04343" stroke-width="0.9" fill="none"/><path d="M0.5 11 L8.5 0.5" stroke="#e04343" stroke-width="1"/></svg>
<svg class="a" style="left:1246.5px;top:184px;" width="13" height="11" viewBox="0 0 13 11"><rect x="0.5" y="2" width="8.5" height="7.5" rx="1" fill="none" stroke="#e04343" stroke-width="0.9"/><path d="M9 5 L12.5 3 V8.5 L9 6.5" fill="none" stroke="#e04343" stroke-width="0.9"/><path d="M1 10.5 L11 0.5" stroke="#e04343" stroke-width="1"/></svg>
<div class="a" style="left:1057px;top:207.5px;width:17.5px;height:6px;background:#3b4a60;border-radius:3px 3px 0 0"></div>
<svg class="a" style="left:1232px;top:210px;" width="28" height="3" viewBox="0 0 28 3"><rect x="0" y="0" width="8" height="3" fill="#f2b8b8"/><rect x="15" y="0" width="12" height="3" fill="#f2b8b8"/></svg>
<div class="a" style="left:1040px;top:213px;width:236px;height:1px;background:#fff;"></div>
<div class="a" style="left:1267.6px;top:94px;width:4.5px;height:118px;background:#f0f0f0;border-radius:2px"></div>
<div class="a" style="left:1267.6px;top:94px;width:4.5px;height:35px;background:#b9b9b9;border-radius:2px"></div>
<div class="a" style="left:1128.6px;top:225px;width:60px;height:14.3px;background:#fff;border:1px solid #b8bcc2;border-radius:4px"></div>
<div class="t" style="left:1135.7px;top:227.73px;font-size:9.3px;color:#333;;transform:scaleX(0.8979);transform-origin:0 0">Пригласить</div>
<div class="a" style="left:1040px;top:256.5px;width:236.5px;height:433.3px;background:#fff;border-radius:6px;overflow:hidden"></div>
<div class="a" style="left:1040px;top:256.5px;width:236.5px;height:30.5px;background:#edf0f4;border-radius:6px 6px 0 0"></div>
<div class="t" style="left:1049.4px;top:269.13px;font-size:9.3px;color:#222;font-weight:bold;;transform:scaleX(0.9246);transform-origin:0 0">Зал персональной конференции Dan...</div>
<svg class="a" style="left:1222px;top:270px;" width="11" height="3" viewBox="0 0 11 3"><circle cx="1.5" cy="1.5" r="1" fill="#555"/><circle cx="5.5" cy="1.5" r="1" fill="#555"/><circle cx="9.5" cy="1.5" r="1" fill="#555"/></svg>
<svg class="a" style="left:1243px;top:268px;" width="10" height="10" viewBox="0 0 10 10"><path d="M4.5 1 H1 V9 H9 V5.5" fill="none" stroke="#555" stroke-width="1.1"/><path d="M5 5 L9 1 M6 1 H9 V4" fill="none" stroke="#555" stroke-width="1.1"/></svg>
<svg class="a" style="left:1258.5px;top:268.5px;" width="8" height="8" viewBox="0 0 8 8"><path d="M0.5 0.5 L7.5 7.5 M7.5 0.5 L0.5 7.5" stroke="#555" stroke-width="1.1"/></svg>
<div class="a" style="left:1048px;top:291.4px;width:29.2px;height:27.8px;background:#fff;border:2px solid #0e71eb;border-radius:7px"></div>
<svg class="a" style="left:1055.5px;top:298px;" width="14" height="13" viewBox="0 0 14 13"><circle cx="3.3" cy="3.3" r="2" fill="#0e71eb"/><circle cx="7" cy="2.2" r="2" fill="#0e71eb"/><circle cx="10.7" cy="3.3" r="2" fill="#0e71eb"/><circle cx="1.8" cy="7" r="1.6" fill="#0e71eb"/><circle cx="12.2" cy="7" r="1.6" fill="#0e71eb"/><path d="M2.5 12 Q2.5 7 7 6.5 Q11.5 7 11.5 12Z" fill="#0e71eb"/></svg>
<div class="t" style="left:1058px;top:324.05px;font-size:8.8px;color:#0e71eb;font-weight:bold;;transform:scaleX(0.6505);transform-origin:0 0">Все</div>
<div class="a" style="left:1084.5px;top:296px;width:1px;height:20px;background:#d0d3d8;"></div>
<div class="a" style="left:1092px;top:291.4px;width:28px;height:27.8px;background:#fff;border:1px solid #c3c7cd;border-radius:7px"></div>
<svg class="a" style="left:1101px;top:300px;" width="10" height="10" viewBox="0 0 10 10"><path d="M5 0.5 V9.5 M0.5 5 H9.5" stroke="#0e71eb" stroke-width="1.5"/></svg>
<div class="t" style="left:1086.8px;top:324.05px;font-size:8.8px;color:#444;;transform:scaleX(0.8830);transform-origin:0 0">Новый чат</div>
<div class="a" style="left:1040px;top:335px;width:236.5px;height:1px;background:#eceef1;"></div>
<div class="a" style="left:1072.4px;top:336px;width:56.8px;height:8px;background:#f0f1f4;border-radius:0 0 8px 8px"></div>
<div class="a" style="left:1052px;top:336px;width:15px;height:5px;background:#5a6a70;border-radius:0 0 3px 3px"></div>
<div class="t" style="left:1075.7px;top:352.85px;font-size:8.8px;color:#3b7fd8;;transform:scaleX(0.9768);transform-origin:0 0">Данило Шувалов</div>
<div class="t" style="left:1147px;top:353.87px;font-size:7.6px;color:#777;;transform:scaleX(0.9624);transform-origin:0 0">16:08</div>
<div class="a" style="left:1051px;top:364px;width:15.8px;height:16.4px;border-radius:50%;overflow:hidden;background:linear-gradient(180deg,#9aa4a8 0%,#c9c0a0 55%,#7a6a40 100%)"><div class="a" style="left:3px;top:7px;width:9px;height:10px;border-radius:50% 50% 0 0;background:#1d1d1d"></div><div class="a" style="left:5px;top:4px;width:5px;height:5px;border-radius:50%;background:#c99a7a"></div></div>
<div class="a" style="left:1071.8px;top:363px;width:162.2px;height:104px;background:#f0f1f4;border-radius:8px"></div>
<div class="t" style="left:1077.8px;top:370.97px;font-size:10.2px;color:#222;-webkit-text-stroke:0.05px #222;;transform:scaleX(0.9871);transform-origin:0 0">А які інші сертифікати</div>
<div class="t" style="left:1077.8px;top:383.77px;font-size:10.2px;color:#222;-webkit-text-stroke:0.05px #222;;transform:scaleX(1.0131);transform-origin:0 0">англійської признають</div>
<div class="t" style="left:1077.8px;top:396.97px;font-size:10.2px;color:#222;-webkit-text-stroke:0.05px #222;;transform:scaleX(0.9575);transform-origin:0 0">університети, бо зараз IELTS</div>
<div class="t" style="left:1077.8px;top:410.37px;font-size:10.2px;color:#222;-webkit-text-stroke:0.05px #222;;transform:scaleX(0.9922);transform-origin:0 0">можна здати тільки за</div>
<div class="t" style="left:1077.8px;top:423.17px;font-size:10.2px;color:#222;-webkit-text-stroke:0.05px #222;;transform:scaleX(1.0380);transform-origin:0 0">кордоном?</div>
<div class="t" style="left:1077.8px;top:437.57px;font-size:10.2px;color:#222;-webkit-text-stroke:0.05px #222;;transform:scaleX(0.9983);transform-origin:0 0">Дякуємо за корисну</div>
<div class="t" style="left:1077.8px;top:450.37px;font-size:10.2px;color:#222;-webkit-text-stroke:0.05px #222;;transform:scaleX(1.0163);transform-origin:0 0">інформацію!</div>
<div class="t" style="left:1076px;top:475.95px;font-size:8.8px;color:#3b7fd8;;transform:scaleX(0.8511);transform-origin:0 0">LG</div>
<div class="t" style="left:1088px;top:476.97px;font-size:7.6px;color:#777;;transform:scaleX(0.9624);transform-origin:0 0">16:10</div>
<div class="a" style="left:1051px;top:488px;width:16px;height:15.3px;background:#8a3fbf;border-radius:4px"></div>
<div class="t" style="left:1056px;top:492.00px;font-size:8.5px;color:#fff;;transform:scaleX(1.2673);transform-origin:0 0">L</div>
<div class="a" style="left:1071px;top:486.7px;width:163px;height:77.3px;background:#f0f1f4;border-radius:8px"></div>
<div class="t" style="left:1077.5px;top:493.47px;font-size:10.2px;color:#222;-webkit-text-stroke:0.05px #222;;transform:scaleX(0.9773);transform-origin:0 0">Чи плануєте подавати на</div>
<div class="t" style="left:1077.5px;top:507.27px;font-size:10.2px;color:#222;-webkit-text-stroke:0.05px #222;;transform:scaleX(0.9836);transform-origin:0 0">модуль Жан Моне з</div>
<div class="t" style="left:1077.5px;top:519.97px;font-size:10.2px;color:#222;-webkit-text-stroke:0.05px #222;;transform:scaleX(1.0134);transform-origin:0 0">прибалтійськими партнерами?</div>
<div class="t" style="left:1077.5px;top:533.47px;font-size:10.2px;color:#222;-webkit-text-stroke:0.05px #222;;transform:scaleX(1.0333);transform-origin:0 0">Тема ШІ та лінгводидактика.</div>
<div class="t" style="left:1077.5px;top:546.87px;font-size:10.2px;color:#222;-webkit-text-stroke:0.05px #222;;transform:scaleX(0.9872);transform-origin:0 0">Дякую за відповідь.</div>
<div class="a" style="left:1071px;top:567px;width:163px;height:23px;background:#f0f1f4;border-radius:8px 8px 8px 8px"></div>
<div class="t" style="left:1077.5px;top:573.37px;font-size:10.2px;color:#222;-webkit-text-stroke:0.05px #222;;transform:scaleX(1.0047);transform-origin:0 0">Пртграма є, потрібні партнери.</div>
<div class="a" style="left:1266.7px;top:336px;width:4px;height:255px;background:#f3f3f3;border-radius:2px"></div>
<div class="a" style="left:1266.7px;top:458px;width:4px;height:88px;background:#b5b5b5;border-radius:2px"></div>
<div class="a" style="left:1044px;top:591.2px;width:230px;height:16px;background:#f2f3f6;"></div>
<svg class="a" style="left:1050px;top:592px;" width="13" height="14" viewBox="0 0 13 14"><circle cx="5" cy="4" r="2.6" fill="none" stroke="#666" stroke-width="0.9"/><path d="M0.8 12 Q1 7.5 5 7.5 Q7 7.5 8 8.5" fill="none" stroke="#666" stroke-width="0.9"/><circle cx="9.5" cy="10.5" r="2.8" fill="#0e71eb"/></svg>
<div class="t" style="left:1064.1px;top:595.66px;font-size:8.2px;color:#555;-webkit-text-stroke:0.05px #555;;transform:scaleX(0.9726);transform-origin:0 0">Кто может видеть ваши сообщения? Запись включена</div>
<div class="t" style="left:1048px;top:614.11px;font-size:10.5px;color:#777;;transform:scaleX(0.9490);transform-origin:0 0">Сообщение все</div>
<div class="t" style="left:1052.5px;top:669.19px;font-size:11px;color:#666;font-family:'Liberation Serif',serif;;transform:scaleX(1.1879);transform-origin:0 0">T</div>
<svg class="a" style="left:1074px;top:669px;" width="11" height="11" viewBox="0 0 11 11"><circle cx="5.5" cy="5.5" r="4.8" fill="none" stroke="#666" stroke-width="0.9"/><circle cx="3.8" cy="4.5" r="0.7" fill="#666"/><circle cx="7.2" cy="4.5" r="0.7" fill="#666"/><path d="M3.3 6.8 Q5.5 8.8 7.7 6.8" fill="none" stroke="#666" stroke-width="0.9"/></svg>
<svg class="a" style="left:1097px;top:669px;" width="9" height="11" viewBox="0 0 9 11"><path d="M0.5 0.5 H5.5 L8.5 3.5 V10.5 H0.5Z" fill="none" stroke="#666" stroke-width="0.9"/></svg>
<svg class="a" style="left:1117px;top:669px;" width="12" height="11" viewBox="0 0 12 11"><rect x="0.5" y="0.5" width="9" height="9" rx="2" fill="none" stroke="#666" stroke-width="0.9"/><path d="M8 8 H11.5 M9.8 6.2 V10" stroke="#666" stroke-width="1" fill="#fff"/></svg>
<svg class="a" style="left:1136.5px;top:673px;" width="5" height="3" viewBox="0 0 5 3"><path d="M0.5 0.5 L2.5 2.5 L4.5 0.5" fill="none" stroke="#666" stroke-width="0.9"/></svg>
<div class="a" style="left:1253px;top:665px;width:14.6px;height:17px;background:#eeeff2;border-radius:3px"></div>
<svg class="a" style="left:1254.5px;top:667.5px;" width="12" height="12" viewBox="0 0 12 12"><path d="M1 4.5 L11 1 L7.5 11 L5.5 6.5Z" fill="#8a8d93"/><path d="M5.5 6.5 L11 1" stroke="#eeeff2" stroke-width="0.8"/></svg>
<div class="a" style="left:0px;top:654px;width:1036px;height:39px;background:#030303;"></div>
<svg class="a" style="left:35px;top:662px;" width="17" height="14" viewBox="0 0 17 14"><path d="M2 11 V8 Q2 1.5 8.5 1.5 Q15 1.5 15 8 V11" fill="none" stroke="#fff" stroke-width="1.4"/><rect x="0.8" y="8" width="3.2" height="5.5" rx="1.2" fill="#fff"/><rect x="13" y="8" width="3.2" height="5.5" rx="1.2" fill="#fff"/><path d="M8.5 12.5 V6 M6.3 8 L8.5 5.8 L10.7 8" fill="none" stroke="#20c863" stroke-width="1.3"/></svg>
<svg class="a" style="left:71px;top:666px;" width="7" height="4" viewBox="0 0 7 4"><path d="M0.5 3.5 L3.5 0.5 L6.5 3.5" fill="none" stroke="#ddd" stroke-width="1.1"/></svg>
<div class="t" style="left:10.5px;top:679.68px;font-size:9px;color:#f2f2f2;-webkit-text-stroke:0.15px #f2f2f2;;transform:scaleX(0.9320);transform-origin:0 0">Подключить звук</div>
<svg class="a" style="left:106px;top:661px;" width="17" height="15" viewBox="0 0 17 15"><rect x="0.8" y="3.5" width="10.5" height="9" rx="1.5" fill="none" stroke="#fff" stroke-width="1.2"/><path d="M11.5 7 L16 4.5 V11.5 L11.5 9" fill="none" stroke="#fff" stroke-width="1.2"/><path d="M1 14.5 L15.5 0.5" stroke="#d8245a" stroke-width="1.5"/></svg>
<div class="t" style="left:103.75px;top:679.68px;font-size:9px;color:#f2f2f2;-webkit-text-stroke:0.15px #f2f2f2;;transform:scaleX(0.8366);transform-origin:0 0">Видео</div>
<svg class="a" style="left:365px;top:661px;" width="13" height="14" viewBox="0 0 13 14"><circle cx="5.5" cy="3.5" r="2.6" fill="none" stroke="#fff" stroke-width="1.1"/><path d="M0.8 12.5 Q0.8 7.5 5.5 7.5 Q10.2 7.5 10.2 12.5Z" fill="none" stroke="#fff" stroke-width="1.1"/><circle cx="10" cy="5" r="2" fill="none" stroke="#fff" stroke-width="1"/></svg>
<div class="t" style="left:382.5px;top:664.15px;font-size:7.5px;color:#ccc;;transform:scaleX(0.9588);transform-origin:0 0">18</div>
<svg class="a" style="left:404px;top:666px;" width="7" height="4" viewBox="0 0 7 4"><path d="M0.5 3.5 L3.5 0.5 L6.5 3.5" fill="none" stroke="#ddd" stroke-width="1.1"/></svg>
<div class="t" style="left:352px;top:679.68px;font-size:9px;color:#f2f2f2;-webkit-text-stroke:0.15px #f2f2f2;;transform:scaleX(0.8953);transform-origin:0 0">Участники</div>
<svg class="a" style="left:437px;top:661px;" width="16" height="16" viewBox="0 0 16 16"><path d="M5 2.5 Q5 1 7 1 H13.5 Q15 1 15 2.5 V8 Q15 9.5 13.5 9.5" fill="none" stroke="#fff" stroke-width="1.1"/><rect x="0.8" y="4.5" width="10.5" height="7.5" rx="3" fill="#030303" stroke="#fff" stroke-width="1.1"/><path d="M3 12 L2.5 15 L5.5 12" fill="#030303" stroke="#fff" stroke-width="1.1"/><circle cx="4" cy="8.2" r="0.7" fill="#fff"/><circle cx="6" cy="8.2" r="0.7" fill="#fff"/><circle cx="8" cy="8.2" r="0.7" fill="#fff"/></svg>
<svg class="a" style="left:464px;top:666px;" width="7" height="4" viewBox="0 0 7 4"><path d="M0.5 3.5 L3.5 0.5 L6.5 3.5" fill="none" stroke="#ddd" stroke-width="1.1"/></svg>
<div class="t" style="left:438px;top:679.68px;font-size:9px;color:#f2f2f2;-webkit-text-stroke:0.15px #f2f2f2;;transform:scaleX(0.8368);transform-origin:0 0">Чат</div>
<svg class="a" style="left:499.5px;top:662px;" width="16" height="14" viewBox="0 0 16 14"><path d="M8 13 L2 7 Q0 4.5 1.5 2.5 Q3.5 0.2 6 1.5 L8 3 L10 1.5 Q12.5 0.2 14.5 2.5 Q16 4.5 14 7Z" fill="none" stroke="#fff" stroke-width="1.2"/></svg>
<svg class="a" style="left:530px;top:666px;" width="7" height="4" viewBox="0 0 7 4"><path d="M0.5 3.5 L3.5 0.5 L6.5 3.5" fill="none" stroke="#ddd" stroke-width="1.1"/></svg>
<div class="t" style="left:480px;top:679.68px;font-size:9px;color:#f2f2f2;-webkit-text-stroke:0.15px #f2f2f2;;transform:scaleX(0.8842);transform-origin:0 0">Отреагировать</div>
<div class="a" style="left:565.5px;top:662px;width:15.75px;height:13px;background:#1ed760;border-radius:2px"></div>
<svg class="a" style="left:568.5px;top:664px;" width="10" height="9" viewBox="0 0 10 9"><path d="M5 8.5 V1.5 M1.8 4.5 L5 1.3 L8.2 4.5" fill="none" stroke="#0a0a0a" stroke-width="1.5"/></svg>
<div class="t" style="left:552px;top:679.68px;font-size:9px;color:#f2f2f2;-webkit-text-stroke:0.15px #f2f2f2;;transform:scaleX(0.8651);transform-origin:0 0">Поделиться</div>
<svg class="a" style="left:656.5px;top:661.5px;" width="17" height="16" viewBox="0 0 17 16"><circle cx="8.5" cy="8" r="7.3" fill="none" stroke="#fff" stroke-width="1.2"/><rect x="7.8" y="6.5" width="1.5" height="5.5" fill="#fff"/><circle cx="8.5" cy="4.5" r="0.9" fill="#fff"/></svg>
<div class="t" style="left:611.3px;top:679.68px;font-size:9px;color:#f2f2f2;-webkit-text-stroke:0.15px #f2f2f2;;transform:scaleX(0.8954);transform-origin:0 0">Информация о конференции</div>
<svg class="a" style="left:752px;top:661.5px;" width="17" height="16" viewBox="0 0 17 16"><circle cx="8.5" cy="8" r="7.3" fill="none" stroke="#fff" stroke-width="1.2"/><circle cx="5.3" cy="8" r="1" fill="#fff"/><circle cx="8.5" cy="8" r="1" fill="#fff"/><circle cx="11.7" cy="8" r="1" fill="#fff"/></svg>
<div class="t" style="left:730.6px;top:679.68px;font-size:9px;color:#f2f2f2;-webkit-text-stroke:0.15px #f2f2f2;;transform:scaleX(0.9169);transform-origin:0 0">Дополнительно</div>
<svg class="a" style="left:993px;top:659px;" width="20" height="19" viewBox="0 0 20 19"><path d="M8.5 1.5 H18 V17 H15" fill="none" stroke="#d8245a" stroke-width="1.2"/><path d="M10 3 L15 1.8 V17.5 L10 16Z" fill="none" stroke="#c01e50" stroke-width="1.1"/><circle cx="5.5" cy="4.8" r="2.2" fill="none" stroke="#fff" stroke-width="1.1"/><path d="M4 8 Q2 8 2 10.5 L1.5 13 Q1.5 14 3 13.5 L4.5 11 L3 17.5 H5 L6.5 13.5 L8 17.5 H10 L8 10.5 L10 12 Q11 12 10.5 11 L8 8 Z" fill="none" stroke="#fff" stroke-width="1"/></svg>
<div class="t" style="left:990.7px;top:679.68px;font-size:9px;color:#f2f2f2;-webkit-text-stroke:0.15px #f2f2f2;;transform:scaleX(0.8741);transform-origin:0 0">Выйти</div>
<div class="a" style="left:0px;top:693px;width:1280px;height:27px;background:#1e1e1e;"></div>
<svg class="a" style="left:10.5px;top:701px;" width="11.5" height="11.5" viewBox="0 0 11.5 11.5"><rect x="0" y="0" width="5.3" height="5.3" fill="#fff"/><rect x="6.2" y="0" width="5.3" height="5.3" fill="#fff"/><rect x="0" y="6.2" width="5.3" height="5.3" fill="#fff"/><rect x="6.2" y="6.2" width="5.3" height="5.3" fill="#fff"/></svg>
<div class="a" style="left:32px;top:693.5px;width:191.75px;height:26.5px;background:#f2f2f2;"></div>
<svg class="a" style="left:40px;top:700px;" width="12" height="13" viewBox="0 0 12 13"><circle cx="7" cy="5" r="4" fill="none" stroke="#333" stroke-width="1.1"/><path d="M4.2 7.8 L0.8 11.5" stroke="#333" stroke-width="1.3"/></svg>
<div class="t" style="left:58.75px;top:701.99px;font-size:11px;color:#333;;transform:scaleX(0.9431);transform-origin:0 0">Поиск</div>
<svg class="a" style="left:176px;top:697px;" width="42" height="20" viewBox="0 0 42 20"><path d="M16 1 Q17.5 8 24 9.5 Q17.5 11 16 18 Q14.5 11 8 9.5 Q14.5 8 16 1Z" fill="#f6c028"/><path d="M27 9 Q27.7 12 30.5 12.7 Q27.7 13.4 27 16.5 Q26.3 13.4 23.5 12.7 Q26.3 12 27 9Z" fill="#f7b733"/><path d="M3 13 Q3.6 15.5 6 16 Q3.6 16.6 3 19 Q2.4 16.6 0 16 Q2.4 15.5 3 13Z" fill="#3aa0ff"/><circle cx="24" cy="3.5" r="1" fill="#f05a5a"/><circle cx="37" cy="14.5" r="1" fill="#7ac943"/></svg>
<svg class="a" style="left:234px;top:700px;" width="12" height="13" viewBox="0 0 12 13"><rect x="0.5" y="2.5" width="8.5" height="7.5" fill="none" stroke="#fff" stroke-width="1.1"/><path d="M0.5 0.5 H9 M0.5 12 H9 M11.3 2 V11" stroke="#fff" stroke-width="1.1"/></svg>
<svg class="a" style="left:266px;top:700px;" width="15" height="13" viewBox="0 0 15 13"><path d="M0.5 2 H6 L7.5 3.5 H14.5 V12.5 H0.5Z" fill="#e8b43a"/><rect x="0.5" y="4.5" width="14" height="8" fill="#f8d36a"/><rect x="4" y="8" width="7" height="3" fill="#3a8ee6"/></svg>
<div class="a" style="left:260px;top:718px;width:27.5px;height:2px;background:#7fb6e8;"></div>
<svg class="a" style="left:299px;top:700px;" width="14" height="14" viewBox="0 0 14 14"><circle cx="7" cy="7" r="6.8" fill="#000"/><path d="M7 2.2 L11.2 4.6 V9.4 L7 11.8 L2.8 9.4 V4.6Z" fill="none" stroke="#fff" stroke-width="1.2"/><path d="M7 4.5 L9 5.7 V8.3 L7 9.5 L5 8.3 V5.7Z" fill="none" stroke="#fff" stroke-width="0.9"/></svg>
<svg class="a" style="left:332px;top:699.5px;" width="15" height="15" viewBox="0 0 15 15"><ellipse cx="7.5" cy="7.5" rx="7" ry="7.2" fill="#e3202a"/><ellipse cx="7.5" cy="7.5" rx="3" ry="5.3" fill="#1e1e1e"/></svg>
<svg class="a" style="left:364px;top:699.5px;" width="16" height="16" viewBox="0 0 16 16"><circle cx="8" cy="8" r="7.8" fill="#db4437"/><path d="M8 8 L15.8 8 A7.8 7.8 0 0 1 4.1 14.8Z" fill="#f4c20d"/><path d="M8 8 L4.1 14.8 A7.8 7.8 0 0 1 1.2 4.1Z" fill="#0f9d58"/><path d="M8 8 L1.2 4.1 A7.8 7.8 0 0 1 8 0.2 L15 4Z" fill="#db4437"/><circle cx="8" cy="8" r="3.6" fill="#fff"/><circle cx="8" cy="8" r="2.8" fill="#4285f4"/></svg>
<div class="a" style="left:391px;top:718px;width:26.5px;height:2px;background:#7fb6e8;"></div>
<svg class="a" style="left:396px;top:699.5px;" width="16" height="16" viewBox="0 0 16 16"><circle cx="8" cy="8" r="7.8" fill="#db4437"/><path d="M8 8 L15.8 8 A7.8 7.8 0 0 1 4.1 14.8Z" fill="#f4c20d"/><path d="M8 8 L4.1 14.8 A7.8 7.8 0 0 1 1.2 4.1Z" fill="#0f9d58"/><circle cx="8" cy="8" r="3.6" fill="#fff"/><circle cx="8" cy="8" r="2.8" fill="#4285f4"/><circle cx="12" cy="12" r="4" fill="#555"/><circle cx="12" cy="11" r="1.6" fill="#ddd"/></svg>
<div class="a" style="left:424px;top:718px;width:26.5px;height:2px;background:#7fb6e8;"></div>
<svg class="a" style="left:429.5px;top:699.5px;" width="16" height="16" viewBox="0 0 16 16"><rect x="5" y="1" width="10.5" height="14" rx="1" fill="#1d6f42"/><path d="M10 3 V13 M6 6 H15 M6 9.5 H15" stroke="#fff" stroke-width="0.6" opacity=".6"/><rect x="0.5" y="3.5" width="8.5" height="9" rx="1" fill="#107c41"/><path d="M2.5 5.5 L7 10.5 M7 5.5 L2.5 10.5" stroke="#fff" stroke-width="1.3"/></svg>
<div class="a" style="left:454.5px;top:693px;width:31.5px;height:27px;background:#3a3a3a;"></div>
<div class="a" style="left:454.5px;top:718px;width:31.5px;height:2px;background:#9fcaf0;"></div>
<svg class="a" style="left:462px;top:699.5px;" width="17" height="17" viewBox="0 0 17 17"><circle cx="8.5" cy="8.5" r="8.3" fill="#0b5cff"/><text x="2.8" y="11.3" font-size="7.5" font-weight="bold" fill="#fff" font-family="Liberation Sans">zm</text></svg>
<div class="a" style="left:489px;top:718px;width:26px;height:2px;background:#7fb6e8;"></div>
<svg class="a" style="left:495px;top:699.5px;" width="16" height="16" viewBox="0 0 16 16"><circle cx="8" cy="8" r="7.8" fill="#2aa3e0"/><path d="M3.5 7.8 L12 4.5 L10.5 12 L7.8 9.8 L6.5 11.2 L6.3 9 L10.5 5.7 L5.6 8.7Z" fill="#fff"/></svg>
<div class="a" style="left:505px;top:709px;width:12px;height:8px;background:#e23a3a;border-radius:4px"></div>
<div class="t" style="left:506.5px;top:710.30px;font-size:6.5px;color:#fff;;transform:scaleX(1.2441);transform-origin:0 0">37</div>
<svg class="a" style="left:998px;top:700px;" width="17" height="16" viewBox="0 0 17 16"><path d="M3 14.5 Q0 14.5 0.5 11.5 Q1 8.8 4 9 Q4.5 5 8.5 5 Q12.5 5 13 9 Q16.5 9 16.5 12 Q16.5 14.5 13.5 14.5Z" fill="#7eb8f0"/><circle cx="13" cy="4.5" r="4" fill="#e23a3a"/><text x="11.3" y="6.8" font-size="6" font-weight="bold" fill="#fff" font-family="Liberation Sans">2</text></svg>
<div class="t" style="left:1019.3px;top:702.11px;font-size:10.5px;color:#fff;;transform:scaleX(0.8340);transform-origin:0 0">9°C</div>
<div class="t" style="left:1039.4px;top:702.11px;font-size:10.5px;color:#fff;;transform:scaleX(0.8688);transform-origin:0 0">Cloudy</div>
<svg class="a" style="left:1085px;top:703px;" width="10" height="7" viewBox="0 0 10 7"><path d="M0.8 6 L5 1.5 L9.2 6" fill="none" stroke="#fff" stroke-width="1.1"/></svg>
<svg class="a" style="left:1101px;top:700px;" width="9" height="14" viewBox="0 0 9 14"><rect x="1" y="3" width="7" height="8" rx="1.5" fill="none" stroke="#fff" stroke-width="0.9"/><path d="M0.5 1 H8.5 M0.5 13 H8.5" stroke="#fff" stroke-width="0.9"/><circle cx="4.5" cy="6" r="1.3" fill="#fff"/></svg>
<svg class="a" style="left:1115.5px;top:701px;" width="12" height="12" viewBox="0 0 12 12"><rect x="2.5" y="0.5" width="9" height="7" fill="none" stroke="#fff" stroke-width="0.9"/><path d="M0.5 3 V11 H6 M1 8 H5 M7 10 H11" stroke="#fff" stroke-width="0.9" fill="none"/></svg>
<svg class="a" style="left:1132.5px;top:702px;" width="11" height="10" viewBox="0 0 11 10"><circle cx="2.5" cy="6" r="2" fill="#e02020"/><circle cx="7" cy="2.5" r="2" fill="#e02020"/><circle cx="8.5" cy="7.5" r="2" fill="#e02020"/><circle cx="5" cy="8" r="1.4" fill="#c01010"/></svg>
<svg class="a" style="left:1147px;top:701px;" width="11" height="12" viewBox="0 0 11 12"><path d="M1 10 A8 8 0 0 1 9 2 M3 10 A6 6 0 0 1 9 4.5" fill="none" stroke="#fff" stroke-width="0.9"/><circle cx="8" cy="9" r="2.5" fill="#fff"/></svg>
<svg class="a" style="left:1163px;top:701px;" width="12" height="12" viewBox="0 0 12 12"><path d="M0.5 4 H3 L6.5 1 V11 L3 8 H0.5Z" fill="none" stroke="#fff" stroke-width="0.9"/><path d="M8.5 4 Q9.5 6 8.5 8 M10.5 2.5 Q12 6 10.5 9.5" fill="none" stroke="#fff" stroke-width="0.8"/></svg>
<div class="t" style="left:1181.6px;top:702.96px;font-size:9.5px;color:#fff;;transform:scaleX(0.7461);transform-origin:0 0">РУС</div>
<div class="t" style="left:1213.3px;top:696.78px;font-size:9px;color:#fff;;transform:scaleX(0.8078);transform-origin:0 0">16:14</div>
<div class="t" style="left:1205.3px;top:708.08px;font-size:9px;color:#fff;;transform:scaleX(0.7975);transform-origin:0 0">10.11.2025</div>
<svg class="a" style="left:1252px;top:700px;" width="17" height="17" viewBox="0 0 17 17"><path d="M1 1 H14 V10 H6 L3 13 V10 H1Z" fill="#fff"/><path d="M3.5 4 H11.5 M3.5 6.5 H11.5" stroke="#1e1e1e" stroke-width="0.9"/><circle cx="12" cy="12.5" r="4.3" fill="#1e1e1e" stroke="#fff" stroke-width="0.9"/><text x="10" y="15" font-size="6.5" fill="#fff" font-family="Liberation Sans">2</text></svg>
<div class="t" style="left:927.5px;top:633.50px;font-size:13px;color:rgba(140,140,140,.55);;transform:scaleX(1.0308);transform-origin:0 0">Активация Windows</div>
<div class="t" style="left:927.5px;top:648.96px;font-size:9.5px;color:rgba(140,140,140,.55);;transform:scaleX(1.0592);transform-origin:0 0">Чтобы активировать Windows, перейдите в раздел "Параметры".</div>
</body></html>
